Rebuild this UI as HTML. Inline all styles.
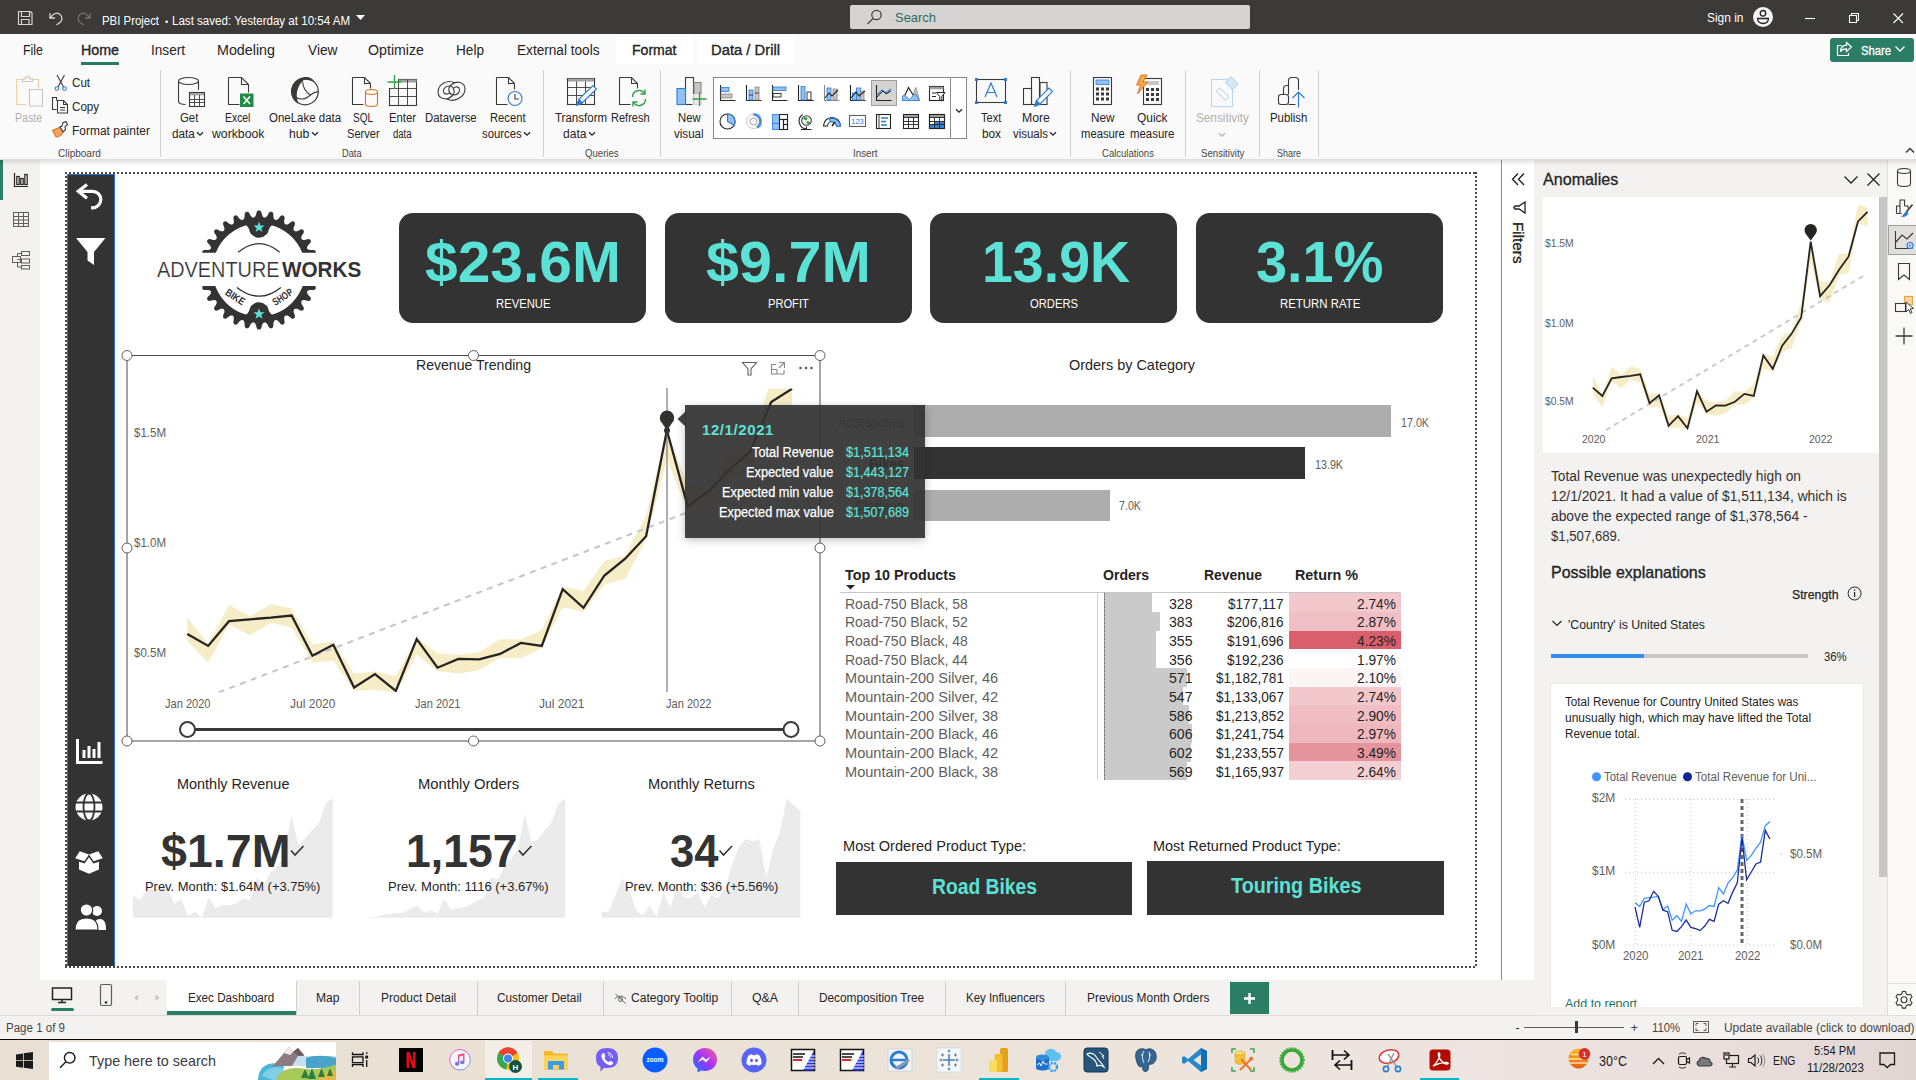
<!DOCTYPE html><html><head><meta charset="utf-8"><title>PBI Project</title><style>

html,body{margin:0;padding:0;}
body{width:1916px;height:1080px;overflow:hidden;background:#fff;position:relative;font-family:"Liberation Sans",sans-serif;}
.r{position:absolute;}
.t{position:absolute;white-space:nowrap;line-height:1;transform-origin:0 50%;}
svg{position:absolute;overflow:visible;}

</style></head><body>
<!-- p_base -->
<div class="r" style="left:0px;top:0px;width:1916px;height:34px;background:#3b3a39;"></div>
<div class="r" style="left:0px;top:34px;width:1916px;height:126px;background:#fafafa;"></div>
<div class="r" style="left:616px;top:35px;width:77px;height:29px;background:#ffffff;"></div>
<div class="r" style="left:697px;top:35px;width:97px;height:29px;background:#ffffff;"></div>
<div class="r" style="left:0px;top:159px;width:1916px;height:1px;background:#e1dfdd;"></div>
<div class="r" style="left:0px;top:160px;width:40px;height:856px;background:#f3f2f1;"></div>
<div class="r" style="left:0px;top:160px;width:3px;height:39.5px;background:#2e7d67;"></div>
<div class="r" style="left:1501px;top:160px;width:1.3px;height:820px;background:#8f8d8b;"></div>
<div class="r" style="left:1502.5px;top:160px;width:32px;height:820px;background:#ffffff;"></div>
<div class="r" style="left:1534px;top:160px;width:353px;height:856px;background:#f3f2f1;"></div>
<div class="r" style="left:1887px;top:160px;width:29px;height:856px;background:#faf9f8;"></div>
<div class="r" style="left:1887px;top:160px;width:1px;height:856px;background:#e1dfdd;"></div>
<div class="r" style="left:0;top:160px;width:1916px;height:6px;background:linear-gradient(rgba(0,0,0,0.11),rgba(0,0,0,0))"></div>
<div class="r" style="left:0px;top:980px;width:1534px;height:36px;background:#f3f2f1;"></div>
<div class="r" style="left:0px;top:1016px;width:1916px;height:23px;background:#f3f2f1;"></div>
<div class="r" style="left:0px;top:1038.7px;width:1916px;height:1.6px;background:#0a0a0a;"></div>
<div class="r" style="left:0;top:1040.3px;width:1916px;height:39.7px;background:linear-gradient(90deg,#e8e0d5 0%,#eae0d4 20%,#ece4da 55%,#eee4e2 78%,#e9dddb 92%,#e2d6d4 100%)"></div>
<!-- p_title -->
<svg style="left:0;top:0" width="400" height="34" viewBox="0 0 400 34" fill="none" stroke="#d8d6d4" stroke-width="1.2">
<path d="M18.5 11.5h12l1.5 1.5v11.5h-13.5z M21.5 11.5v5h8v-5 M21.5 24.5v-5h7.5v5" />
<path d="M50 13v5h5 M50.5 18c2-4 6-6 9-4s3 6 1 8l-4 3" stroke-width="1.3"/>
<path d="M90 13v5h-5 M89.500 18c-2-4-6-6-9-4s-3 6-1 8l4 3" stroke="#77736f" stroke-width="1.3"/>
<path d="M356 15h9l-4.500 5z" fill="#ffffff" stroke="none"/>
</svg>
<div class="t" style="left:102.0px;top:14.6px;font-size:12.5px;color:#ffffff;transform:scaleX(0.912);">PBI Project</div>
<div class="t" style="left:165.0px;top:17.6px;font-size:9px;color:#ffffff;transform:scaleX(1.000);">•</div>
<div class="t" style="left:172.0px;top:14.6px;font-size:12.5px;color:#ffffff;transform:scaleX(0.925);">Last saved: Yesterday at 10:54 AM</div>
<div class="r" style="left:850px;top:5px;width:400px;height:24px;background:#d6d4d2;border-radius:2px;"></div>
<svg style="left:866px;top:9px" width="18" height="16" viewBox="0 0 18 16" fill="none" stroke="#444" stroke-width="1.3"><circle cx="10.500" cy="6" r="4.700"/><path d="M7 9.500L1.500 15"/></svg>
<div class="t" style="left:895.0px;top:10.9px;font-size:13.5px;color:#2f6b5c;transform:scaleX(0.959);">Search</div>
<div class="t" style="left:1707.0px;top:12.1px;font-size:12.5px;color:#ffffff;transform:scaleX(0.955);">Sign in</div>
<svg style="left:1753px;top:7px" width="20" height="20" viewBox="0 0 20 20"><circle cx="10" cy="10" r="10" fill="#f5f5f5"/><circle cx="10" cy="6.300" r="2.800" fill="none" stroke="#222" stroke-width="1.300"/><path d="M4.600 11.500h10.800c0 3.200-2.400 5-5.400 5s-5.400-1.800-5.400-5z" fill="none" stroke="#222" stroke-width="1.300"/></svg>
<svg style="left:1800px;top:8px" width="110" height="20" viewBox="0 0 110 20" fill="none" stroke="#fff" stroke-width="1.1"><path d="M5 10.500h10"/><path d="M49.500 7.500h7v7h-7z M51.500 7.500v-2h7v7h-2"/><path d="M93.500 5.500l9.500 9.500 M103 5.500l-9.500 9.500"/></svg>
<div class="t" style="left:23.0px;top:42.9px;font-size:14px;color:#252423;transform:scaleX(0.887);">File</div>
<div class="t" style="left:81.0px;top:42.9px;font-size:14px;color:#252423;transform:scaleX(1.018);-webkit-text-stroke:0.35px #252423;">Home</div>
<div class="t" style="left:150.5px;top:42.9px;font-size:14px;color:#252423;transform:scaleX(0.971);">Insert</div>
<div class="t" style="left:217.0px;top:42.9px;font-size:14px;color:#252423;transform:scaleX(1.021);">Modeling</div>
<div class="t" style="left:307.5px;top:42.9px;font-size:14px;color:#252423;transform:scaleX(0.980);">View</div>
<div class="t" style="left:368.0px;top:42.9px;font-size:14px;color:#252423;transform:scaleX(1.014);">Optimize</div>
<div class="t" style="left:456.0px;top:42.9px;font-size:14px;color:#252423;transform:scaleX(0.972);">Help</div>
<div class="t" style="left:517.0px;top:42.9px;font-size:14px;color:#252423;transform:scaleX(0.973);">External tools</div>
<div class="t" style="left:631.5px;top:42.9px;font-size:14px;color:#252423;transform:scaleX(1.004);-webkit-text-stroke:0.35px #252423;">Format</div>
<div class="t" style="left:710.5px;top:42.9px;font-size:14px;color:#252423;transform:scaleX(1.056);-webkit-text-stroke:0.35px #252423;">Data / Drill</div>
<div class="r" style="left:81px;top:62px;width:38px;height:3px;background:#2a7b64;"></div>
<div class="r" style="left:1830px;top:38px;width:84px;height:24px;background:#2b7d66;border-radius:3px;"></div>
<svg style="left:1836px;top:41px" width="18" height="16" viewBox="0 0 18 16" fill="none" stroke="#fff" stroke-width="1.2"><path d="M5.500 4.500h-4v10h11v-2.500"/><path d="M10.500 1.500l5 4.500-5 4.500v-2.700c-3 0-5 1-6 3 0-4 2-6.500 6-6.700z"/></svg>
<div class="t" style="left:1861.0px;top:44.0px;font-size:13px;color:#ffffff;transform:scaleX(0.865);-webkit-text-stroke:0.3px #fff;">Share</div>
<svg style="left:1894px;top:45px" width="12" height="8" viewBox="0 0 12 8" fill="none" stroke="#fff" stroke-width="1.3"><path d="M1.500 1.500l4.500 4.500 4.500-4.500"/></svg>
<svg style="left:1905px;top:147px" width="10" height="7" viewBox="0 0 10 7" fill="none" stroke="#333" stroke-width="1.4"><path d="M1 5.500l4-4 4 4"/></svg>
<!-- p_ribbon -->
<div class="r" style="left:160px;top:70px;width:1px;height:87px;background:#d2d0ce;"></div>
<div class="r" style="left:543px;top:70px;width:1px;height:87px;background:#d2d0ce;"></div>
<div class="r" style="left:660px;top:70px;width:1px;height:87px;background:#d2d0ce;"></div>
<div class="r" style="left:1070px;top:70px;width:1px;height:87px;background:#d2d0ce;"></div>
<div class="r" style="left:1185px;top:70px;width:1px;height:87px;background:#d2d0ce;"></div>
<div class="r" style="left:1259px;top:70px;width:1px;height:87px;background:#d2d0ce;"></div>
<div class="r" style="left:1318px;top:70px;width:1px;height:87px;background:#d2d0ce;"></div>
<svg style="left:13px;top:75px" width="34" height="34" viewBox="0 0 34 34" fill="none" stroke="#3b3a39" stroke-width="1.1"><path d="M9 4.500h-5.500v25h9.500 M20 4.500h5.500v9" stroke="#f3cfa6"/><path d="M9.500 6.500v-2.500h2.500a2.500 2.500 0 0 1 5 0h2.500v2.500z" stroke="#c8c6c4" fill="#fafafa"/><path d="M16.500 14.500h13v16.500h-13z" stroke="#c8c6c4" fill="#fafafa"/></svg>
<div class="t" style="left:14.7px;top:112.4px;font-size:12px;color:#b3b0ad;transform:scaleX(0.880);">Paste</div>
<svg style="left:53px;top:74px" width="16" height="18" viewBox="0 0 16 18" fill="none" stroke="#3b3a39" stroke-width="1.100"><path d="M4 1l6.500 12 M11.500 1l-6.500 12"/><circle cx="4" cy="14.500" r="1.800" stroke="#2b7cd3"/><circle cx="11.500" cy="14.500" r="1.800" stroke="#2b7cd3"/></svg>
<div class="t" style="left:72.1px;top:77.1px;font-size:12px;color:#252423;transform:scaleX(0.969);">Cut</div>
<svg style="left:51px;top:96px" width="18" height="18" viewBox="0 0 18 18" fill="none" stroke="#3b3a39" stroke-width="1.100"><path d="M5.500 4.500v-3h-4v12h4"/><path d="M6.500 4.500h6l4 4v8.500h-10z M12.500 4.500v4h4 M9 11.500h5 M9 14h5"/></svg>
<div class="t" style="left:72.1px;top:101.1px;font-size:12px;color:#252423;transform:scaleX(0.967);">Copy</div>
<svg style="left:51px;top:121px" width="18" height="17" viewBox="0 0 18 17" fill="none" stroke="#3b3a39" stroke-width="1.100"><path d="M1.500 9.500l8-3.500 2.500 5.500c-2 3-5 4.500-7 4.500z" fill="#f0a060" stroke="#d9731c"/><path d="M9 6l2-1 1-3.500 3 -0.800 1.500 3-2.500 2 .5 3-2.500 2z" fill="#fafafa"/></svg>
<div class="t" style="left:72.1px;top:125.3px;font-size:12px;color:#252423;transform:scaleX(0.998);">Format painter</div>
<div class="t" style="left:58.4px;top:148.4px;font-size:11px;color:#484644;transform:scaleX(0.909);">Clipboard</div>
<svg style="left:174px;top:75px" width="34" height="34" viewBox="0 0 34 34" fill="none" stroke="#3b3a39" stroke-width="1.1"><path d="M4.500 6v20c0 2 3 3.500 7 3.500 M24.500 6v9" /><ellipse cx="14.500" cy="6" rx="10" ry="3.500"/><rect x="15.500" y="17.500" width="15" height="14" fill="#fafafa"/><path d="M16 19.200h14" stroke-width="2.200" stroke="#a19f9d"/><path d="M15.500 24.500h15 M15.500 27.500h15 M20.500 20v11.500 M25.500 20v11.500" stroke-width="0.900"/></svg>
<div class="t" style="left:180.0px;top:112.4px;font-size:12px;color:#252423;transform:scaleX(0.946);">Get</div>
<div class="t" style="left:171.6px;top:128.4px;font-size:12px;color:#252423;transform:scaleX(0.981);">data</div>
<svg style="left:196px;top:131px" width="8" height="6" viewBox="0 0 8 6" fill="none" stroke="#252423" stroke-width="1.3"><path d="M1 1.200l3 3 3-3"/></svg>
<svg style="left:223px;top:75px" width="34" height="34" viewBox="0 0 34 34" fill="none" stroke="#3b3a39" stroke-width="1.1"><path d="M5.500 2.500h13l7 7v8 M5.500 2.500v27h11 M18.500 2.500v7h7"/><rect x="17" y="18.500" width="13.500" height="13.500" fill="#1e8a44" stroke="none"/><path d="M20.500 21.500l6.500 7.500 M27 21.500l-6.500 7.500" stroke="#fff" stroke-width="1.600"/></svg>
<div class="t" style="left:225.0px;top:112.4px;font-size:12px;color:#252423;transform:scaleX(0.866);">Excel</div>
<div class="t" style="left:211.7px;top:128.4px;font-size:12px;color:#252423;transform:scaleX(1.020);">workbook</div>
<svg style="left:287.5px;top:75px" width="34" height="34" viewBox="0 0 34 34" fill="none" stroke="#3b3a39" stroke-width="1.1"><circle cx="17" cy="16.500" r="13.300" stroke-width="1.200"/><path d="M17 3.200C9 3.200 3.700 9.500 3.700 16.500c0 5 2.500 9 6.300 11.500C6.500 22 7.500 10 17 3.200z" fill="#3b3a39"/><path d="M11.500 5.500c3-4 10.500-4 13.500 0.500-4-2-9.500-2-13.500-0.500z" fill="#3b3a39"/><path d="M14.500 6.500c0.500 6 3 10.500 8 13.500 3-2.500 5.500-3.500 8-3"/><path d="M8 22.500c4.500 2.500 10 1.500 14.500-2.500"/></svg>
<div class="t" style="left:268.6px;top:112.4px;font-size:12px;color:#252423;transform:scaleX(0.956);">OneLake data</div>
<div class="t" style="left:288.6px;top:128.4px;font-size:12px;color:#252423;transform:scaleX(1.019);">hub</div>
<svg style="left:310.5px;top:131px" width="8" height="6" viewBox="0 0 8 6" fill="none" stroke="#252423" stroke-width="1.3"><path d="M1 1.200l3 3 3-3"/></svg>
<svg style="left:348px;top:75px" width="34" height="34" viewBox="0 0 34 34" fill="none" stroke="#3b3a39" stroke-width="1.1"><path d="M4.500 2.500h12l6 6v5 M4.500 2.500v27h11 M16.500 2.500v6h6"/><path d="M17.500 17v12c0 1.500 2.500 2.500 6 2.500s6-1 6-2.500v-12" stroke="#d9731c" fill="#fafafa"/><ellipse cx="23.500" cy="17" rx="6" ry="2.500" stroke="#d9731c" fill="#fafafa"/></svg>
<div class="t" style="left:352.7px;top:112.4px;font-size:12px;color:#252423;transform:scaleX(0.837);">SQL</div>
<div class="t" style="left:346.7px;top:128.4px;font-size:12px;color:#252423;transform:scaleX(0.922);">Server</div>
<svg style="left:385px;top:76px" width="34" height="34" viewBox="0 0 34 34" fill="none" stroke="#3b3a39" stroke-width="1.1"><rect x="4.500" y="3.500" width="27" height="26" /><path d="M13 5h18.500" stroke="#a19f9d" stroke-width="3"/><path d="M4.500 12.500h27 M4.500 20.500h27 M13.500 3.500v26 M22.500 3.500v26" stroke-width="0.900"/><rect x="0" y="0" width="13" height="12" fill="#fafafa" stroke="none"/><path d="M9.500 -1v14 M2.500 6h14" stroke="#2ea043" stroke-width="1.300"/></svg>
<div class="t" style="left:389.3px;top:112.4px;font-size:12px;color:#252423;transform:scaleX(0.945);">Enter</div>
<div class="t" style="left:393.3px;top:128.4px;font-size:12px;color:#252423;transform:scaleX(0.796);">data</div>
<svg style="left:433.5px;top:75px" width="34" height="34" viewBox="0 0 34 34" fill="none" stroke="#3b3a39" stroke-width="1.1"><path d="M21 8c-7-4-17 1-17 9 0 7 9 9 14 4 4-4 2-10-3-10-4 0-7 4-5 7 2 2 5 1 6-1" stroke-width="1.100"/><path d="M13 24c7 4 18-2 18-10 0-7-9-9-14-4-4 4-2 10 3 10 4 0 7-4 5-7-2-2-5-1-6 1" stroke-width="1.100"/></svg>
<div class="t" style="left:425.4px;top:112.4px;font-size:12px;color:#252423;transform:scaleX(0.944);">Dataverse</div>
<svg style="left:491px;top:75px" width="34" height="34" viewBox="0 0 34 34" fill="none" stroke="#3b3a39" stroke-width="1.1"><path d="M5.500 2.500h12l6 6v6 M5.500 2.500v27h11 M17.500 2.500v6h6"/><circle cx="24" cy="23.500" r="7" stroke="#2b7cd3" fill="#fafafa"/><path d="M24 19v5h4" stroke="#3b3a39"/></svg>
<div class="t" style="left:489.5px;top:112.4px;font-size:12px;color:#252423;transform:scaleX(0.936);">Recent</div>
<div class="t" style="left:481.5px;top:128.4px;font-size:12px;color:#252423;transform:scaleX(0.943);">sources</div>
<svg style="left:522.5px;top:131px" width="8" height="6" viewBox="0 0 8 6" fill="none" stroke="#252423" stroke-width="1.3"><path d="M1 1.200l3 3 3-3"/></svg>
<div class="t" style="left:342.2px;top:148.4px;font-size:11px;color:#484644;transform:scaleX(0.844);">Data</div>
<svg style="left:563px;top:75px" width="34" height="34" viewBox="0 0 34 34" fill="none" stroke="#3b3a39" stroke-width="1.1"><rect x="4.500" y="3.500" width="27" height="26"/><path d="M5 5h26" stroke="#a19f9d" stroke-width="3"/><path d="M4.500 12.500h27 M4.500 20.500h27 M13.500 6.500v23 M22.500 6.500v23" stroke-width="0.900"/><path d="M14 30l2-6 14-13.500 3.500 3.500-14 13.500z" fill="#fafafa" stroke="#2b7cd3"/><path d="M14 30l2-5.500 3.500 3.500z" fill="#2b7cd3" stroke="#2b7cd3"/></svg>
<div class="t" style="left:554.7px;top:112.4px;font-size:12px;color:#252423;transform:scaleX(0.961);">Transform</div>
<div class="t" style="left:562.7px;top:128.4px;font-size:12px;color:#252423;transform:scaleX(1.006);">data</div>
<svg style="left:587.5px;top:131px" width="8" height="6" viewBox="0 0 8 6" fill="none" stroke="#252423" stroke-width="1.3"><path d="M1 1.200l3 3 3-3"/></svg>
<svg style="left:615px;top:75px" width="34" height="34" viewBox="0 0 34 34" fill="none" stroke="#3b3a39" stroke-width="1.1"><path d="M4.500 2.500h12l6 6v5 M4.500 2.500v27h11 M16.500 2.500v6h6"/><path d="M17.500 22a6.500 6.500 0 0 1 12-3.500 M30.500 24a6.500 6.500 0 0 1-12 3.500" stroke="#2ea043" stroke-width="1.400"/><path d="M30 14.500v4.500h-4.500 M18 31.500v-4.500h4.500" stroke="#2ea043" stroke-width="1.400"/></svg>
<div class="t" style="left:611.3px;top:112.4px;font-size:12px;color:#252423;transform:scaleX(0.919);">Refresh</div>
<div class="t" style="left:585.2px;top:148.4px;font-size:11px;color:#484644;transform:scaleX(0.872);">Queries</div>
<svg style="left:673px;top:75px" width="34" height="34" viewBox="0 0 34 34" fill="none" stroke="#3b3a39" stroke-width="1.1"><rect x="12.500" y="2.500" width="8" height="27" fill="#fafafa"/><rect x="21" y="7.500" width="7" height="22" fill="#c8c6c4" stroke="#8a8886"/><rect x="4" y="13.500" width="8.500" height="16" fill="#8fc1f2" stroke="#2b7cd3"/><rect x="19" y="19" width="14" height="13" fill="#fafafa" stroke="none" opacity="0.7"/><path d="M26.500 17v14 M19.500 24h14" stroke="#2ea043" stroke-width="1.300"/></svg>
<div class="t" style="left:677.9px;top:112.4px;font-size:12px;color:#252423;transform:scaleX(0.941);">New</div>
<div class="t" style="left:673.9px;top:128.4px;font-size:12px;color:#252423;transform:scaleX(0.965);">visual</div>
<div class="r" style="left:713px;top:77px;width:254px;height:61.5px;background:#ffffff;border:1px solid #8a8886;box-sizing:border-box;"></div>
<div class="r" style="left:950px;top:77.5px;width:1px;height:60.5px;background:#8a8886;"></div>
<div class="r" style="left:871px;top:80px;width:26px;height:26px;background:#d6d4d2;border:1px solid #a19f9d;box-sizing:border-box;"></div>
<svg style="left:954.5px;top:108px" width="8" height="6" viewBox="0 0 8 6" fill="none" stroke="#252423" stroke-width="1.3"><path d="M1 1.200l3 3 3-3"/></svg>
<svg style="left:718px;top:84px" width="20" height="20" viewBox="0 0 20 20" fill="none" stroke="#252423" stroke-width="1.100"><path d="M2.500 1v15.500h15" /><rect x="3" y="3.500" width="8" height="4" fill="#8fc1f2" stroke="#2b7cd3" stroke-width="0.800"/><rect x="3" y="10" width="11" height="4" fill="#c8c6c4" stroke="#8a8886" stroke-width="0.800"/></svg>
<svg style="left:744px;top:84px" width="20" height="20" viewBox="0 0 20 20" fill="none" stroke="#252423" stroke-width="1.100"><path d="M2.500 1v15.500h15"/><rect x="5" y="6" width="4" height="10" fill="#8fc1f2" stroke="#2b7cd3" stroke-width="0.800"/><rect x="11" y="3" width="4" height="13" fill="#c8c6c4" stroke="#8a8886" stroke-width="0.800"/><path d="M5 11h4 M11 9h4" stroke-width="0.800"/></svg>
<svg style="left:770px;top:84px" width="20" height="20" viewBox="0 0 20 20" fill="none" stroke="#252423" stroke-width="1.100"><path d="M2.500 1v15.500h15"/><rect x="3" y="3" width="13" height="3.500" fill="#8fc1f2" stroke="#2b7cd3" stroke-width="0.800"/><rect x="3" y="9.500" width="8" height="3.500" fill="none" stroke-width="0.900"/></svg>
<svg style="left:796px;top:84px" width="20" height="20" viewBox="0 0 20 20" fill="none" stroke="#252423" stroke-width="1.100"><path d="M2.500 1v15.500h15"/><rect x="5" y="2.500" width="4" height="13.500" fill="#8fc1f2" stroke="#2b7cd3" stroke-width="0.800"/><rect x="11" y="8" width="4" height="8" fill="none" stroke-width="0.900"/></svg>
<svg style="left:822px;top:84px" width="20" height="20" viewBox="0 0 20 20" fill="none" stroke="#252423" stroke-width="1.100"><path d="M2.500 1v15.500h15" stroke="#8a8886"/><rect x="5" y="4" width="4" height="12" fill="#8fc1f2" stroke="#2b7cd3" stroke-width="0.800"/><rect x="11" y="5" width="4" height="11" fill="#c8c6c4" stroke="#8a8886" stroke-width="0.800"/><path d="M3 14l4-5 3 3 6-6" stroke-width="1.100"/></svg>
<svg style="left:848px;top:84px" width="20" height="20" viewBox="0 0 20 20" fill="none" stroke="#252423" stroke-width="1.100"><path d="M2.500 1v15.500h15"/><rect x="4.500" y="9" width="4" height="7" fill="#8fc1f2" stroke="#2b7cd3" stroke-width="0.800"/><rect x="8.500" y="4" width="4" height="12" fill="#8fc1f2" stroke="#2b7cd3" stroke-width="0.800"/><rect x="12.500" y="7" width="3.500" height="9" fill="#c8c6c4" stroke="#8a8886" stroke-width="0.800"/><path d="M3 14l5-6 3 4 6-5" stroke-width="1.100"/></svg>
<svg style="left:874px;top:84px" width="20" height="20" viewBox="0 0 20 20" fill="none" stroke="#252423" stroke-width="1.100"><path d="M2.500 1v15.500h15"/><path d="M3 11l5-5 4 3 5-4" stroke="#2b7cd3" stroke-width="1.100"/><path d="M3 13l6-6 3 3 5-3" stroke-width="1" /></svg>
<svg style="left:901px;top:84px" width="20" height="20" viewBox="0 0 20 20" fill="none" stroke="#252423" stroke-width="1.100"><path d="M12 9.500l3-6 3.500 13h-6z" fill="#c8c6c4" stroke="#8a8886" stroke-width="0.800"/><path d="M1.500 16.500l6-13 4.500 7.500" fill="none"/><path d="M1.500 16.500v-4.500l2-1 5 4.500 5.500-6 4.500 7z" fill="#8fc1f2" stroke="#2b7cd3" stroke-width="0.800"/></svg>
<svg style="left:927px;top:84px" width="20" height="20" viewBox="0 0 20 20" fill="none" stroke="#252423" stroke-width="1.100"><rect x="2.500" y="2.500" width="14" height="14"/><path d="M2.500 4h14" stroke="#a19f9d" stroke-width="2.500"/><path d="M5 9h4 M5 12.500h4" stroke-width="1.200"/><path d="M9.500 8.500h8.500l-3.200 4v4.500l-2 -1v-3.500z" fill="#fff" stroke-width="1"/></svg>
<svg style="left:718px;top:112px" width="20" height="20" viewBox="0 0 20 20" fill="none" stroke="#252423" stroke-width="1.100"><circle cx="9.500" cy="9.500" r="7.500"/><path d="M9.500 9.500v-7.500a7.500 7.500 0 0 1 6.500 11.200z" fill="#8fc1f2" stroke="#2b7cd3"/></svg>
<svg style="left:744px;top:112px" width="20" height="20" viewBox="0 0 20 20" fill="none" stroke="#252423" stroke-width="1.100"><circle cx="9.500" cy="9.500" r="7" stroke="#c8c6c4" stroke-width="1"/><circle cx="9.500" cy="9.500" r="3.500" stroke="#a19f9d" stroke-width="1"/><path d="M9.500 2.500a7 7 0 0 1 3.500 13" stroke="#2b7cd3" stroke-width="3" stroke-opacity="0.800"/></svg>
<svg style="left:770px;top:112px" width="20" height="20" viewBox="0 0 20 20" fill="none" stroke="#252423" stroke-width="1.100"><rect x="2.500" y="2.500" width="7" height="9" fill="#8fc1f2" stroke="#2b7cd3" stroke-width="0.800"/><rect x="2.500" y="11.500" width="7" height="6" fill="#8fc1f2" stroke="#2b7cd3" stroke-width="0.800"/><rect x="9.500" y="2.500" width="8" height="5" fill="none"/><rect x="9.500" y="7.500" width="4" height="10" fill="none"/><rect x="13.500" y="7.500" width="4" height="5" fill="none"/><rect x="13.500" y="12.500" width="4" height="5" fill="none"/></svg>
<svg style="left:796px;top:112px" width="20" height="20" viewBox="0 0 20 20" fill="none" stroke="#252423" stroke-width="1.100"><circle cx="10.500" cy="8.500" r="4.800" fill="#fff" stroke="#3b3a39"/><path d="M7.500 6.500c1.500-2 4-1.500 3.500.5s-2 1-3.500-.5z M10.500 10c1.500-1 3.500-.5 3 1s-2.500 1-3-1z" fill="#2ea043" stroke="#2ea043" stroke-width="0.600"/><path d="M6.500 2.500a8 8 0 0 0 4 14.500 M5 17.500h10.500 M10.500 14.500v3" /></svg>
<svg style="left:822px;top:112px" width="20" height="20" viewBox="0 0 20 20" fill="none" stroke="#252423" stroke-width="1.100"><path d="M1.500 14a8.500 8.500 0 0 1 17 0h-4a4.500 4.500 0 0 0-9 0z" fill="#fff"/><path d="M7 7a8.500 8.500 0 0 1 11.500 7h-4a4.500 4.500 0 0 0-5.500-4z" fill="#8fc1f2" stroke="#2b7cd3"/><path d="M10 14l3-4" stroke-width="1.500"/></svg>
<svg style="left:848px;top:112px" width="20" height="20" viewBox="0 0 20 20" fill="none" stroke="#252423" stroke-width="1.100"><rect x="1.500" y="3.500" width="16" height="11" stroke="#605e5c"/><text x="9.500" y="12" font-size="7.500" text-anchor="middle" fill="#2b7cd3" stroke="none" font-family="Liberation Sans, sans-serif">123</text></svg>
<svg style="left:874px;top:112px" width="20" height="20" viewBox="0 0 20 20" fill="none" stroke="#252423" stroke-width="1.100"><rect x="2.500" y="2.500" width="14" height="14"/><path d="M5 3v13" stroke-width="0.900"/><path d="M7 6h7 M7 9.500h5 M7 13h6" stroke="#2b7cd3" stroke-width="1.600"/></svg>
<svg style="left:901px;top:112px" width="20" height="20" viewBox="0 0 20 20" fill="none" stroke="#252423" stroke-width="1.100"><rect x="2.500" y="2.500" width="15" height="14"/><rect x="3" y="3" width="14" height="2.500" fill="#a19f9d" stroke="none"/><path d="M2.500 5.500h15 M2.500 9.500h15 M2.500 12.500h15 M7.500 5.500v11 M12.500 5.500v11" stroke-width="0.900"/></svg>
<svg style="left:927px;top:112px" width="20" height="20" viewBox="0 0 20 20" fill="none" stroke="#252423" stroke-width="1.100"><rect x="2.500" y="2.500" width="15" height="14"/><rect x="7.500" y="9.500" width="10" height="7" fill="#3a86d6" stroke="none"/><rect x="2.500" y="12.500" width="5" height="4" fill="#3a86d6" stroke="none"/><rect x="3" y="3" width="14" height="2.500" fill="#a19f9d" stroke="none"/><path d="M2.500 5.500h15 M2.500 9.500h15 M2.500 12.500h15 M7.500 5.500v11 M12.500 5.500v11" stroke-width="0.900"/><rect x="2.500" y="2.500" width="15" height="14"/></svg>
<div class="t" style="left:853.3px;top:148.4px;font-size:11px;color:#484644;transform:scaleX(0.891);">Insert</div>
<svg style="left:973px;top:75px" width="36" height="34" viewBox="0 0 36 34" fill="none" stroke="#3b3a39" stroke-width="1.1"><rect x="3.500" y="4.500" width="29" height="23"/><path d="M12 22l6-14 6 14 M14 17.500h8" stroke="#2b7cd3" stroke-width="1.200"/><g fill="#2b7cd3" stroke="none"><rect x="2" y="3" width="3" height="3"/><rect x="31" y="3" width="3" height="3"/><rect x="2" y="26" width="3" height="3"/><rect x="31" y="26" width="3" height="3"/></g></svg>
<div class="t" style="left:981.0px;top:112.4px;font-size:12px;color:#252423;transform:scaleX(0.927);">Text</div>
<div class="t" style="left:982.0px;top:128.4px;font-size:12px;color:#252423;transform:scaleX(0.982);">box</div>
<svg style="left:1020px;top:75px" width="34" height="34" viewBox="0 0 34 34" fill="none" stroke="#3b3a39" stroke-width="1.1"><rect x="11.500" y="2.500" width="8" height="27" fill="#fafafa"/><rect x="20" y="7.500" width="7" height="22" fill="#fafafa"/><rect x="3.500" y="13.500" width="8" height="16" fill="#fafafa"/><path d="M15 31l1.500-5.500 12.500-12.500 3.500 3.500-12.500 12.500z" fill="#fafafa" stroke="#2b7cd3"/><path d="M15 31l1.500-5.500 3.500 3.500z" fill="#2b7cd3" stroke="#2b7cd3"/></svg>
<div class="t" style="left:1022.4px;top:112.4px;font-size:12px;color:#252423;transform:scaleX(1.021);">More</div>
<div class="t" style="left:1012.9px;top:128.4px;font-size:12px;color:#252423;transform:scaleX(0.952);">visuals</div>
<svg style="left:1049px;top:131px" width="8" height="6" viewBox="0 0 8 6" fill="none" stroke="#252423" stroke-width="1.3"><path d="M1 1.200l3 3 3-3"/></svg>
<svg style="left:1085px;top:75px" width="34" height="34" viewBox="0 0 34 34" fill="none" stroke="#3b3a39" stroke-width="1.1"><rect x="8.500" y="2.500" width="18" height="27"/><rect x="11" y="5" width="13" height="4.500" fill="#8fc1f2" stroke="#2b7cd3" stroke-width="0.800"/><g fill="#3b3a39" stroke="none"><rect x="11" y="12.500" width="3" height="3"/><rect x="16" y="12.500" width="3" height="3"/><rect x="21" y="12.500" width="3" height="3"/><rect x="11" y="17.500" width="3" height="3"/><rect x="16" y="17.500" width="3" height="3"/><rect x="21" y="17.500" width="3" height="3"/><rect x="11" y="22.500" width="3" height="3"/><rect x="16" y="22.500" width="3" height="3"/><rect x="21" y="22.500" width="3" height="3"/></g></svg>
<div class="t" style="left:1091.2px;top:112.4px;font-size:12px;color:#252423;transform:scaleX(0.979);">New</div>
<div class="t" style="left:1081.3px;top:128.4px;font-size:12px;color:#252423;transform:scaleX(0.940);">measure</div>
<svg style="left:1133px;top:75px" width="34" height="34" viewBox="0 0 34 34" fill="none" stroke="#3b3a39" stroke-width="1.1"><rect x="10.500" y="3.500" width="18" height="26"/><rect x="13" y="6" width="13" height="4" fill="#c8c6c4" stroke="none"/><g fill="#3b3a39" stroke="none"><rect x="13" y="13" width="3" height="3"/><rect x="18" y="13" width="3" height="3"/><rect x="23" y="13" width="3" height="3"/><rect x="13" y="18" width="3" height="3"/><rect x="18" y="18" width="3" height="3"/><rect x="23" y="18" width="3" height="3"/><rect x="13" y="23" width="3" height="3"/><rect x="18" y="23" width="3" height="3"/><rect x="23" y="23" width="3" height="3"/></g><path d="M8 0l-4.500 10h4l-3 9 10-12h-4.500l4-7z" fill="#f7a64a" stroke="#d9731c" stroke-width="0.900"/></svg>
<div class="t" style="left:1137.1px;top:112.4px;font-size:12px;color:#252423;transform:scaleX(0.994);">Quick</div>
<div class="t" style="left:1130.2px;top:128.4px;font-size:12px;color:#252423;transform:scaleX(0.951);">measure</div>
<div class="t" style="left:1101.7px;top:148.4px;font-size:11px;color:#484644;transform:scaleX(0.866);">Calculations</div>
<svg style="left:1207px;top:75px" width="34" height="34" viewBox="0 0 34 34" fill="none" stroke="#3b3a39" stroke-width="1.1"><rect x="4.500" y="4.500" width="21" height="27" stroke="#b9d6f2"/><path d="M9.500 16.500l3.500-3.500 9 9-3.500 3.500z" stroke="#c5dcf3"/><path d="M18.500 7.500l5.500-5.500 7 7-5.500 5.500z" fill="#d6e7f7" stroke="#b9d6f2"/></svg>
<div class="t" style="left:1196.0px;top:112.4px;font-size:12px;color:#b3b0ad;transform:scaleX(0.979);">Sensitivity</div>
<svg style="left:1218px;top:132px" width="8" height="6" viewBox="0 0 8 6" fill="none" stroke="#b3b0ad" stroke-width="1.3"><path d="M1 1.200l3 3 3-3"/></svg>
<div class="t" style="left:1200.5px;top:148.4px;font-size:11px;color:#484644;transform:scaleX(0.876);">Sensitivity</div>
<svg style="left:1271px;top:75px" width="34" height="34" viewBox="0 0 34 34" fill="none" stroke="#3b3a39" stroke-width="1.1"><rect x="7.500" y="19.500" width="10" height="10" rx="2.500"/><path d="M12.500 19.500v-6a3 3 0 0 1 3-3h2 M17.500 19.500v-14a3 3 0 0 1 3-3h4a3 3 0 0 1 3 3v9.500 M17.500 29.500h7"/><path d="M27.500 32.500v-15.500 M21.500 23l6-6 6 6" stroke="#2b7cd3" stroke-width="1.200"/></svg>
<div class="t" style="left:1270.4px;top:112.4px;font-size:12px;color:#252423;transform:scaleX(0.950);">Publish</div>
<div class="t" style="left:1276.9px;top:148.4px;font-size:11px;color:#484644;transform:scaleX(0.814);">Share</div>
<!-- p_report -->
<div class="r" style="left:65px;top:172px;width:1412px;height:2px;background:repeating-linear-gradient(90deg,#4b4845 0,#4b4845 2px,transparent 2px,transparent 4px);"></div><div class="r" style="left:65px;top:966px;width:1412px;height:2px;background:repeating-linear-gradient(90deg,#4b4845 0,#4b4845 2px,transparent 2px,transparent 4px);"></div><div class="r" style="left:65px;top:172px;width:2px;height:795px;background:repeating-linear-gradient(180deg,#4b4845 0,#4b4845 2px,transparent 2px,transparent 4px);"></div><div class="r" style="left:1475px;top:172px;width:2px;height:796px;background:repeating-linear-gradient(180deg,#4b4845 0,#4b4845 2px,transparent 2px,transparent 4px);"></div>
<div class="r" style="left:67px;top:174px;width:48px;height:792px;background:#333333;border:1px solid #2673cc;border-bottom:none;box-sizing:border-box;"></div>
<svg style="left:67px;top:174px" width="48" height="792" viewBox="67 174 48 792" fill="none" stroke="#fff"><path d="M87 184.500l-8.700 6.800 8.700 7 M79 191.300h13.500a8.300 8.300 0 0 1 0 16.600h-1.500" stroke-width="3.200" stroke-linejoin="miter"/><path d="M76 238h29.500l-11.500 14v13l-6.500-4.500v-8.500z" fill="#fff" stroke="none"/><path d="M77.500 739v23.500h25" stroke-width="3"/><g fill="#fff" stroke="none"><rect x="82.500" y="750" width="3" height="8"/><rect x="87.500" y="746" width="3" height="12"/><rect x="92.500" y="749" width="3" height="9"/><rect x="97.500" y="742" width="3" height="16"/></g><circle cx="89" cy="807" r="13.500" fill="#fff" stroke="none"/><g stroke="#333" stroke-width="1.800"><ellipse cx="89" cy="807" rx="5.500" ry="13.500"/><path d="M75 802.500h28 M75 811.500h28"/></g><g fill="#fff" stroke="none"><path d="M75.200 858.300l4.600-7 9.200 3.200-4.600 6.800z M102.800 858.300l-4.600-7-9.200 3.200 4.600 6.800z"/><path d="M79 861.700l5.600 1.900 4.400-6.300 4.400 6.300 5.600-1.900v7.800l-10 4.300-10-4.300z"/></g><g fill="#fff" stroke="none"><circle cx="97" cy="911" r="5"/><path d="M93 930c1-8 3-11 7-11 5 0 6 5 6 11z"/><circle cx="86.500" cy="910" r="6.200" stroke="#333" stroke-width="1.200"/><path d="M75 930c0-8 4-12 11.500-12s11.500 4 11.500 12z" stroke="#333" stroke-width="1.200"/></g></svg>
<svg style="left:193.8px;top:204.7px" width="130" height="130" viewBox="-65 -65 130 130"><defs><clipPath id="gcl"><rect x="-65" y="-65" width="130" height="47.800"/><rect x="-65" y="15.900" width="130" height="50"/></clipPath></defs><g clip-path="url(#gcl)"><path d="M0.00,-59.60 L0.52,-59.56 L1.04,-59.39 L1.55,-59.02 L2.04,-58.41 L2.50,-57.21 L2.91,-55.44 L3.33,-54.39 L3.75,-53.65 L4.18,-53.12 L4.62,-52.75 L5.06,-52.52 L5.51,-52.41 L5.97,-52.42 L6.45,-52.56 L6.96,-52.83 L7.49,-53.26 L8.05,-53.89 L8.69,-54.84 L9.45,-56.48 L10.15,-57.56 L10.76,-58.05 L11.33,-58.30 L11.88,-58.37 L12.39,-58.30 L12.89,-58.15 L13.36,-57.87 L13.78,-57.41 L14.14,-56.71 L14.34,-55.44 L14.37,-53.63 L14.56,-52.51 L14.82,-51.70 L15.13,-51.09 L15.48,-50.64 L15.87,-50.32 L16.29,-50.12 L16.74,-50.04 L17.24,-50.07 L17.79,-50.23 L18.39,-50.54 L19.08,-51.04 L19.90,-51.83 L20.99,-53.28 L21.89,-54.19 L22.59,-54.54 L23.21,-54.67 L23.75,-54.62 L24.24,-54.45 L24.70,-54.20 L25.10,-53.83 L25.42,-53.29 L25.62,-52.53 L25.55,-51.25 L25.21,-49.47 L25.16,-48.33 L25.25,-47.49 L25.43,-46.83 L25.67,-46.31 L25.98,-45.92 L26.35,-45.64 L26.78,-45.46 L27.27,-45.39 L27.84,-45.43 L28.50,-45.61 L29.28,-45.96 L30.24,-46.56 L31.61,-47.75 L32.68,-48.45 L33.44,-48.66 L34.07,-48.65 L34.59,-48.49 L35.03,-48.22 L35.43,-47.88 L35.75,-47.44 L35.94,-46.84 L35.98,-46.06 L35.65,-44.81 L34.94,-43.15 L34.66,-42.05 L34.57,-41.20 L34.61,-40.52 L34.74,-39.96 L34.96,-39.52 L35.26,-39.16 L35.65,-38.90 L36.11,-38.73 L36.68,-38.65 L37.36,-38.69 L38.19,-38.87 L39.26,-39.26 L40.84,-40.14 L42.04,-40.60 L42.82,-40.64 L43.44,-40.51 L43.92,-40.24 L44.29,-39.88 L44.61,-39.47 L44.83,-38.97 L44.89,-38.34 L44.77,-37.57 L44.19,-36.42 L43.15,-34.94 L42.64,-33.92 L42.38,-33.11 L42.27,-32.44 L42.29,-31.87 L42.41,-31.38 L42.64,-30.98 L42.95,-30.64 L43.38,-30.37 L43.91,-30.18 L44.59,-30.07 L45.44,-30.08 L46.56,-30.24 L48.29,-30.77 L49.57,-30.97 L50.34,-30.85 L50.91,-30.59 L51.32,-30.23 L51.62,-29.80 L51.84,-29.33 L51.95,-28.80 L51.88,-28.17 L51.61,-27.44 L50.79,-26.44 L49.47,-25.21 L48.77,-24.31 L48.34,-23.58 L48.09,-22.94 L47.99,-22.38 L48.01,-21.88 L48.14,-21.44 L48.39,-21.04 L48.74,-20.69 L49.23,-20.39 L49.87,-20.15 L50.70,-19.97 L51.83,-19.90 L53.64,-20.05 L54.92,-19.99 L55.65,-19.71 L56.16,-19.34 L56.49,-18.90 L56.68,-18.42 L56.81,-17.91 L56.80,-17.37 L56.61,-16.77 L56.18,-16.11 L55.18,-15.30 L53.63,-14.37 L52.75,-13.64 L52.18,-13.01 L51.81,-12.44 L51.60,-11.91 L51.51,-11.42 L51.55,-10.96 L51.70,-10.52 L51.98,-10.10 L52.39,-9.71 L52.97,-9.34 L53.74,-8.99 L54.84,-8.69 L56.63,-8.46 L57.88,-8.13 L58.53,-7.71 L58.95,-7.24 L59.18,-6.74 L59.27,-6.23 L59.29,-5.71 L59.17,-5.18 L58.86,-4.63 L58.30,-4.08 L57.16,-3.50 L55.44,-2.91 L54.44,-2.38 L53.75,-1.88 L53.27,-1.39 L52.95,-0.92 L52.76,-0.46 L52.70,-0.00 L52.76,0.46 L52.95,0.92 L53.27,1.39 L53.75,1.88 L54.44,2.38 L55.44,2.91 L57.16,3.50 L58.30,4.08 L58.86,4.63 L59.17,5.18 L59.29,5.71 L59.27,6.23 L59.18,6.74 L58.95,7.24 L58.53,7.71 L57.88,8.13 L56.63,8.46 L54.84,8.69 L53.74,8.99 L52.97,9.34 L52.39,9.71 L51.98,10.10 L51.70,10.52 L51.55,10.96 L51.51,11.42 L51.60,11.91 L51.81,12.44 L52.18,13.01 L52.75,13.64 L53.63,14.37 L55.18,15.30 L56.18,16.11 L56.61,16.77 L56.80,17.37 L56.81,17.91 L56.68,18.42 L56.49,18.90 L56.16,19.34 L55.65,19.71 L54.92,19.99 L53.64,20.05 L51.83,19.90 L50.70,19.97 L49.87,20.15 L49.23,20.39 L48.74,20.69 L48.39,21.04 L48.14,21.44 L48.01,21.88 L47.99,22.38 L48.09,22.94 L48.34,23.58 L48.77,24.31 L49.47,25.21 L50.79,26.44 L51.61,27.44 L51.88,28.17 L51.95,28.80 L51.84,29.33 L51.62,29.80 L51.32,30.23 L50.91,30.59 L50.34,30.85 L49.57,30.97 L48.29,30.77 L46.56,30.24 L45.44,30.08 L44.59,30.07 L43.91,30.18 L43.38,30.37 L42.95,30.64 L42.64,30.98 L42.41,31.38 L42.29,31.87 L42.27,32.44 L42.38,33.11 L42.64,33.92 L43.15,34.94 L44.19,36.42 L44.77,37.57 L44.89,38.34 L44.83,38.97 L44.61,39.47 L44.29,39.88 L43.92,40.24 L43.44,40.51 L42.82,40.64 L42.04,40.60 L40.84,40.14 L39.26,39.26 L38.19,38.87 L37.36,38.69 L36.68,38.65 L36.11,38.73 L35.65,38.90 L35.26,39.16 L34.96,39.52 L34.74,39.96 L34.61,40.52 L34.57,41.20 L34.66,42.05 L34.94,43.15 L35.65,44.81 L35.98,46.06 L35.94,46.84 L35.75,47.44 L35.43,47.88 L35.03,48.22 L34.59,48.49 L34.07,48.65 L33.44,48.66 L32.68,48.45 L31.61,47.75 L30.24,46.56 L29.28,45.96 L28.50,45.61 L27.84,45.43 L27.27,45.39 L26.78,45.46 L26.35,45.64 L25.98,45.92 L25.67,46.31 L25.43,46.83 L25.25,47.49 L25.16,48.33 L25.21,49.47 L25.55,51.25 L25.62,52.53 L25.42,53.29 L25.10,53.83 L24.70,54.20 L24.24,54.45 L23.75,54.62 L23.21,54.67 L22.59,54.54 L21.89,54.19 L20.99,53.28 L19.90,51.83 L19.08,51.04 L18.39,50.54 L17.79,50.23 L17.24,50.07 L16.74,50.04 L16.29,50.12 L15.87,50.32 L15.48,50.64 L15.13,51.09 L14.82,51.70 L14.56,52.51 L14.37,53.63 L14.34,55.44 L14.14,56.71 L13.78,57.41 L13.36,57.87 L12.89,58.15 L12.39,58.30 L11.88,58.37 L11.33,58.30 L10.76,58.05 L10.15,57.56 L9.45,56.48 L8.69,54.84 L8.05,53.89 L7.49,53.26 L6.96,52.83 L6.45,52.56 L5.97,52.42 L5.51,52.41 L5.06,52.52 L4.62,52.75 L4.18,53.12 L3.75,53.65 L3.33,54.39 L2.91,55.44 L2.50,57.21 L2.04,58.41 L1.55,59.02 L1.04,59.39 L0.52,59.56 L0.00,59.60 L-0.52,59.56 L-1.04,59.39 L-1.55,59.02 L-2.04,58.41 L-2.50,57.21 L-2.91,55.44 L-3.33,54.39 L-3.75,53.65 L-4.18,53.12 L-4.62,52.75 L-5.06,52.52 L-5.51,52.41 L-5.97,52.42 L-6.45,52.56 L-6.96,52.83 L-7.49,53.26 L-8.05,53.89 L-8.69,54.84 L-9.45,56.48 L-10.15,57.56 L-10.76,58.05 L-11.33,58.30 L-11.88,58.37 L-12.39,58.30 L-12.89,58.15 L-13.36,57.87 L-13.78,57.41 L-14.14,56.71 L-14.34,55.44 L-14.37,53.63 L-14.56,52.51 L-14.82,51.70 L-15.13,51.09 L-15.48,50.64 L-15.87,50.32 L-16.29,50.12 L-16.74,50.04 L-17.24,50.07 L-17.79,50.23 L-18.39,50.54 L-19.08,51.04 L-19.90,51.83 L-20.99,53.28 L-21.89,54.19 L-22.59,54.54 L-23.21,54.67 L-23.75,54.62 L-24.24,54.45 L-24.70,54.20 L-25.10,53.83 L-25.42,53.29 L-25.62,52.53 L-25.55,51.25 L-25.21,49.47 L-25.16,48.33 L-25.25,47.49 L-25.43,46.83 L-25.67,46.31 L-25.98,45.92 L-26.35,45.64 L-26.78,45.46 L-27.27,45.39 L-27.84,45.43 L-28.50,45.61 L-29.28,45.96 L-30.24,46.56 L-31.61,47.75 L-32.68,48.45 L-33.44,48.66 L-34.07,48.65 L-34.59,48.49 L-35.03,48.22 L-35.43,47.88 L-35.75,47.44 L-35.94,46.84 L-35.98,46.06 L-35.65,44.81 L-34.94,43.15 L-34.66,42.05 L-34.57,41.20 L-34.61,40.52 L-34.74,39.96 L-34.96,39.52 L-35.26,39.16 L-35.65,38.90 L-36.11,38.73 L-36.68,38.65 L-37.36,38.69 L-38.19,38.87 L-39.26,39.26 L-40.84,40.14 L-42.04,40.60 L-42.82,40.64 L-43.44,40.51 L-43.92,40.24 L-44.29,39.88 L-44.61,39.47 L-44.83,38.97 L-44.89,38.34 L-44.77,37.57 L-44.19,36.42 L-43.15,34.94 L-42.64,33.92 L-42.38,33.11 L-42.27,32.44 L-42.29,31.87 L-42.41,31.38 L-42.64,30.98 L-42.95,30.64 L-43.38,30.37 L-43.91,30.18 L-44.59,30.07 L-45.44,30.08 L-46.56,30.24 L-48.29,30.77 L-49.57,30.97 L-50.34,30.85 L-50.91,30.59 L-51.32,30.23 L-51.62,29.80 L-51.84,29.33 L-51.95,28.80 L-51.88,28.17 L-51.61,27.44 L-50.79,26.44 L-49.47,25.21 L-48.77,24.31 L-48.34,23.58 L-48.09,22.94 L-47.99,22.38 L-48.01,21.88 L-48.14,21.44 L-48.39,21.04 L-48.74,20.69 L-49.23,20.39 L-49.87,20.15 L-50.70,19.97 L-51.83,19.90 L-53.64,20.05 L-54.92,19.99 L-55.65,19.71 L-56.16,19.34 L-56.49,18.90 L-56.68,18.42 L-56.81,17.91 L-56.80,17.37 L-56.61,16.77 L-56.18,16.11 L-55.18,15.30 L-53.63,14.37 L-52.75,13.64 L-52.18,13.01 L-51.81,12.44 L-51.60,11.91 L-51.51,11.42 L-51.55,10.96 L-51.70,10.52 L-51.98,10.10 L-52.39,9.71 L-52.97,9.34 L-53.74,8.99 L-54.84,8.69 L-56.63,8.46 L-57.88,8.13 L-58.53,7.71 L-58.95,7.24 L-59.18,6.74 L-59.27,6.23 L-59.29,5.71 L-59.17,5.18 L-58.86,4.63 L-58.30,4.08 L-57.16,3.50 L-55.44,2.91 L-54.44,2.38 L-53.75,1.88 L-53.27,1.39 L-52.95,0.92 L-52.76,0.46 L-52.70,0.00 L-52.76,-0.46 L-52.95,-0.92 L-53.27,-1.39 L-53.75,-1.88 L-54.44,-2.38 L-55.44,-2.91 L-57.16,-3.50 L-58.30,-4.08 L-58.86,-4.63 L-59.17,-5.18 L-59.29,-5.71 L-59.27,-6.23 L-59.18,-6.74 L-58.95,-7.24 L-58.53,-7.71 L-57.88,-8.13 L-56.63,-8.46 L-54.84,-8.69 L-53.74,-8.99 L-52.97,-9.34 L-52.39,-9.71 L-51.98,-10.10 L-51.70,-10.52 L-51.55,-10.96 L-51.51,-11.42 L-51.60,-11.91 L-51.81,-12.44 L-52.18,-13.01 L-52.75,-13.64 L-53.63,-14.37 L-55.18,-15.30 L-56.18,-16.11 L-56.61,-16.77 L-56.80,-17.37 L-56.81,-17.91 L-56.68,-18.42 L-56.49,-18.90 L-56.16,-19.34 L-55.65,-19.71 L-54.92,-19.99 L-53.64,-20.05 L-51.83,-19.90 L-50.70,-19.97 L-49.87,-20.15 L-49.23,-20.39 L-48.74,-20.69 L-48.39,-21.04 L-48.14,-21.44 L-48.01,-21.88 L-47.99,-22.38 L-48.09,-22.94 L-48.34,-23.58 L-48.77,-24.31 L-49.47,-25.21 L-50.79,-26.44 L-51.61,-27.44 L-51.88,-28.17 L-51.95,-28.80 L-51.84,-29.33 L-51.62,-29.80 L-51.32,-30.23 L-50.91,-30.59 L-50.34,-30.85 L-49.57,-30.97 L-48.29,-30.77 L-46.56,-30.24 L-45.44,-30.08 L-44.59,-30.07 L-43.91,-30.18 L-43.38,-30.37 L-42.95,-30.64 L-42.64,-30.98 L-42.41,-31.38 L-42.29,-31.87 L-42.27,-32.44 L-42.38,-33.11 L-42.64,-33.92 L-43.15,-34.94 L-44.19,-36.42 L-44.77,-37.57 L-44.89,-38.34 L-44.83,-38.97 L-44.61,-39.47 L-44.29,-39.88 L-43.92,-40.24 L-43.44,-40.51 L-42.82,-40.64 L-42.04,-40.60 L-40.84,-40.14 L-39.26,-39.26 L-38.19,-38.87 L-37.36,-38.69 L-36.68,-38.65 L-36.11,-38.73 L-35.65,-38.90 L-35.26,-39.16 L-34.96,-39.52 L-34.74,-39.96 L-34.61,-40.52 L-34.57,-41.20 L-34.66,-42.05 L-34.94,-43.15 L-35.65,-44.81 L-35.98,-46.06 L-35.94,-46.84 L-35.75,-47.44 L-35.43,-47.88 L-35.03,-48.22 L-34.59,-48.49 L-34.07,-48.65 L-33.44,-48.66 L-32.68,-48.45 L-31.61,-47.75 L-30.24,-46.56 L-29.28,-45.96 L-28.50,-45.61 L-27.84,-45.43 L-27.27,-45.39 L-26.78,-45.46 L-26.35,-45.64 L-25.98,-45.92 L-25.67,-46.31 L-25.43,-46.83 L-25.25,-47.49 L-25.16,-48.33 L-25.21,-49.47 L-25.55,-51.25 L-25.62,-52.53 L-25.42,-53.29 L-25.10,-53.83 L-24.70,-54.20 L-24.24,-54.45 L-23.75,-54.62 L-23.21,-54.67 L-22.59,-54.54 L-21.89,-54.19 L-20.99,-53.28 L-19.90,-51.83 L-19.08,-51.04 L-18.39,-50.54 L-17.79,-50.23 L-17.24,-50.07 L-16.74,-50.04 L-16.29,-50.12 L-15.87,-50.32 L-15.48,-50.64 L-15.13,-51.09 L-14.82,-51.70 L-14.56,-52.51 L-14.37,-53.63 L-14.34,-55.44 L-14.14,-56.71 L-13.78,-57.41 L-13.36,-57.87 L-12.89,-58.15 L-12.39,-58.30 L-11.88,-58.37 L-11.33,-58.30 L-10.76,-58.05 L-10.15,-57.56 L-9.45,-56.48 L-8.69,-54.84 L-8.05,-53.89 L-7.49,-53.26 L-6.96,-52.83 L-6.45,-52.56 L-5.97,-52.42 L-5.51,-52.41 L-5.06,-52.52 L-4.62,-52.75 L-4.18,-53.12 L-3.75,-53.65 L-3.33,-54.39 L-2.91,-55.44 L-2.50,-57.21 L-2.04,-58.41 L-1.55,-59.02 L-1.04,-59.39 L-0.52,-59.56Z M0,-46.5 A46.5,46.5 0 1,0 0,46.5 A46.5,46.5 0 1,0 0,-46.5Z" fill="#333333" fill-rule="evenodd"/><circle cx="0" cy="-42.3" r="10" fill="#333333"/><path d="M-17 -47.5 Q-10 -44.5 -8 -36 L8 -36 Q10 -44.5 17 -47.5 Z" fill="#333333"/><circle cx="0" cy="42.3" r="10" fill="#333333"/><path d="M-17 47.5 Q-10 44.5 -8 36 L8 36 Q10 44.5 17 47.5 Z" fill="#333333"/></g><path d="M-20.800 -17.800Q0 -34.800 20.600 -17.800" fill="none" stroke="#333333" stroke-width="1.300"/><path d="M-22.100 17.400Q0 35 21.900 17.400" fill="none" stroke="#333333" stroke-width="1.300"/><polygon points="0.00,-48.40 1.43,-44.57 5.52,-44.39 2.32,-41.85 3.41,-37.91 0.00,-40.16 -3.41,-37.91 -2.32,-41.85 -5.52,-44.39 -1.43,-44.57" fill="#5ce1d6"/><polygon points="0.00,38.30 1.43,42.13 5.52,42.31 2.32,44.85 3.41,48.79 0.00,46.54 -3.41,48.79 -2.32,44.85 -5.52,42.31 -1.43,42.13" fill="#5ce1d6"/><text x="-24.100" y="30.500" font-size="10.500" font-weight="bold" fill="#333333" text-anchor="middle" transform="rotate(33 -24.100 27.500)" font-family="Liberation Sans, sans-serif" textLength="21" lengthAdjust="spacingAndGlyphs">BIKE</text><text x="23.900" y="30.500" font-size="10.500" font-weight="bold" fill="#333333" text-anchor="middle" transform="rotate(-33 23.900 27.500)" font-family="Liberation Sans, sans-serif" textLength="22" lengthAdjust="spacingAndGlyphs">SHOP</text></svg>
<div class="t" style="left:156.6px;top:258.6px;font-size:22px;color:#333333;transform:scaleX(0.903);-webkit-text-stroke:0.2px #fff;">ADVENTURE</div>
<div class="t" style="left:281.7px;top:258.6px;font-size:22px;color:#333333;transform:scaleX(0.939);font-weight:bold;">WORKS</div>
<div class="r" style="left:399px;top:213.1px;width:247px;height:109.6px;background:#333333;border-radius:14px;"></div>
<div class="t" style="left:425.0px;top:233.9px;font-size:57.5px;color:#5ce1d6;transform:scaleX(1.021);font-weight:bold;">$23.6M</div>
<div class="t" style="left:496.0px;top:297.5px;font-size:12px;color:#ffffff;transform:scaleX(0.939);">REVENUE</div>
<div class="r" style="left:665.3px;top:213.1px;width:247px;height:109.6px;background:#333333;border-radius:14px;"></div>
<div class="t" style="left:705.8px;top:233.9px;font-size:57.5px;color:#5ce1d6;transform:scaleX(1.031);font-weight:bold;">$9.7M</div>
<div class="t" style="left:767.5px;top:298.3px;font-size:12px;color:#ffffff;transform:scaleX(0.927);">PROFIT</div>
<div class="r" style="left:930px;top:213.1px;width:247px;height:109.6px;background:#333333;border-radius:14px;"></div>
<div class="t" style="left:982.0px;top:233.9px;font-size:57.5px;color:#5ce1d6;transform:scaleX(0.965);font-weight:bold;">13.9K</div>
<div class="t" style="left:1030.0px;top:297.5px;font-size:12px;color:#ffffff;transform:scaleX(0.935);">ORDERS</div>
<div class="r" style="left:1196.4px;top:213.1px;width:247px;height:109.6px;background:#333333;border-radius:14px;"></div>
<div class="t" style="left:1256.4px;top:233.9px;font-size:57.5px;color:#5ce1d6;transform:scaleX(0.972);font-weight:bold;">3.1%</div>
<div class="t" style="left:1279.6px;top:297.5px;font-size:12px;color:#ffffff;transform:scaleX(0.952);">RETURN RATE</div>
<div class="t" style="left:1068.5px;top:357.3px;font-size:15px;color:#252423;transform:scaleX(0.963);">Orders by Category</div>
<div class="t" style="left:837.5px;top:415.2px;font-size:14.5px;color:#605e5c;transform:scaleX(0.851);">Accessories</div>
<div class="t" style="left:869.0px;top:457.2px;font-size:14.5px;color:#252423;transform:scaleX(0.905);font-weight:bold;">Bikes</div>
<div class="t" style="left:855.0px;top:499.2px;font-size:14.5px;color:#605e5c;transform:scaleX(0.921);">Clothing</div>
<div class="r" style="left:914px;top:405px;width:476.7px;height:31.7px;background:#adadad;"></div>
<div class="r" style="left:914px;top:447.2px;width:391.2px;height:31.9px;background:#333333;"></div>
<div class="r" style="left:914px;top:489.6px;width:196px;height:31.9px;background:#adadad;"></div>
<div class="t" style="left:1400.6px;top:416.6px;font-size:12px;color:#605e5c;transform:scaleX(0.893);">17.0K</div>
<div class="t" style="left:1315.0px;top:458.7px;font-size:12px;color:#605e5c;transform:scaleX(0.893);">13.9K</div>
<div class="t" style="left:1119.0px;top:500.4px;font-size:12px;color:#605e5c;transform:scaleX(0.891);">7.0K</div>
<div class="t" style="left:845.3px;top:567.1px;font-size:15px;color:#252423;transform:scaleX(0.954);font-weight:bold;">Top 10 Products</div>
<div class="t" style="left:1103.4px;top:567.1px;font-size:15px;color:#252423;transform:scaleX(0.939);font-weight:bold;">Orders</div>
<div class="t" style="left:1203.5px;top:567.1px;font-size:15px;color:#252423;transform:scaleX(0.928);font-weight:bold;">Revenue</div>
<div class="t" style="left:1295.1px;top:567.1px;font-size:15px;color:#252423;transform:scaleX(0.957);font-weight:bold;">Return %</div>
<svg style="left:846px;top:585px" width="9" height="5" viewBox="0 0 9 5"><path d="M0 0h9l-4.500 4.500z" fill="#252423"/></svg>
<div class="r" style="left:840px;top:592px;width:561px;height:1px;background:#c8c6c4;"></div>
<div class="r" style="left:1097px;top:593px;width:1px;height:187px;background:#d2d0ce;"></div>
<div class="r" style="left:1103.5px;top:593px;width:1.5px;height:187px;background:repeating-linear-gradient(180deg,#5a5a5a 0,#5a5a5a 1px,#b5b5b5 1px,#b5b5b5 2px);"></div>
<div class="r" style="left:1289.3px;top:593.3px;width:111.7px;height:18.98px;background:rgb(242,200,205);"></div>
<div class="r" style="left:1105px;top:593.3px;width:47.068px;height:18.98px;background:#cacaca;"></div>
<div class="t" style="left:845.3px;top:596.0px;font-size:15px;color:#605e5c;transform:scaleX(0.932);">Road-750 Black, 58</div>
<div class="t" style="left:1168.5px;top:596.0px;font-size:15px;color:#252423;transform:scaleX(0.939);">328</div>
<div class="t" style="left:1228.0px;top:596.0px;font-size:15px;color:#252423;transform:scaleX(0.905);">$177,117</div>
<div class="t" style="left:1356.5px;top:596.0px;font-size:15px;color:#252423;transform:scaleX(0.917);">2.74%</div>
<div class="r" style="left:1289.3px;top:611.98px;width:111.7px;height:18.98px;background:rgb(239,191,197);"></div>
<div class="r" style="left:1105px;top:611.98px;width:54.9605px;height:18.98px;background:#cacaca;"></div>
<div class="t" style="left:845.3px;top:614.0px;font-size:15px;color:#605e5c;transform:scaleX(0.932);">Road-750 Black, 52</div>
<div class="t" style="left:1168.5px;top:614.0px;font-size:15px;color:#252423;transform:scaleX(0.939);">383</div>
<div class="t" style="left:1227.0px;top:614.0px;font-size:15px;color:#252423;transform:scaleX(0.905);">$206,816</div>
<div class="t" style="left:1356.5px;top:614.0px;font-size:15px;color:#252423;transform:scaleX(0.917);">2.87%</div>
<div class="r" style="left:1289.3px;top:630.66px;width:111.7px;height:18.98px;background:rgb(217,95,109);"></div>
<div class="r" style="left:1105px;top:630.66px;width:50.9425px;height:18.98px;background:#cacaca;"></div>
<div class="t" style="left:845.3px;top:633.0px;font-size:15px;color:#605e5c;transform:scaleX(0.932);">Road-750 Black, 48</div>
<div class="t" style="left:1168.5px;top:633.0px;font-size:15px;color:#252423;transform:scaleX(0.939);">355</div>
<div class="t" style="left:1227.0px;top:633.0px;font-size:15px;color:#252423;transform:scaleX(0.905);">$191,696</div>
<div class="t" style="left:1356.5px;top:633.0px;font-size:15px;color:#252423;transform:scaleX(0.917);">4.23%</div>
<div class="r" style="left:1289.3px;top:649.34px;width:111.7px;height:18.98px;background:rgb(255,255,255);"></div>
<div class="r" style="left:1105px;top:649.34px;width:51.086px;height:18.98px;background:#cacaca;"></div>
<div class="t" style="left:845.3px;top:652.0px;font-size:15px;color:#605e5c;transform:scaleX(0.932);">Road-750 Black, 44</div>
<div class="t" style="left:1168.5px;top:652.0px;font-size:15px;color:#252423;transform:scaleX(0.939);">356</div>
<div class="t" style="left:1227.0px;top:652.0px;font-size:15px;color:#252423;transform:scaleX(0.905);">$192,236</div>
<div class="t" style="left:1356.5px;top:652.0px;font-size:15px;color:#252423;transform:scaleX(0.917);">1.97%</div>
<div class="r" style="left:1289.3px;top:668.02px;width:111.7px;height:18.98px;background:rgb(252,245,246);"></div>
<div class="r" style="left:1105px;top:668.02px;width:81.9385px;height:18.98px;background:#cacaca;"></div>
<div class="t" style="left:845.3px;top:670.0px;font-size:15px;color:#605e5c;transform:scaleX(0.972);">Mountain-200 Silver, 46</div>
<div class="t" style="left:1168.5px;top:670.0px;font-size:15px;color:#252423;transform:scaleX(0.939);">571</div>
<div class="t" style="left:1215.7px;top:670.0px;font-size:15px;color:#252423;transform:scaleX(0.905);">$1,182,781</div>
<div class="t" style="left:1356.5px;top:670.0px;font-size:15px;color:#252423;transform:scaleX(0.917);">2.10%</div>
<div class="r" style="left:1289.3px;top:686.7px;width:111.7px;height:18.98px;background:rgb(242,200,205);"></div>
<div class="r" style="left:1105px;top:686.7px;width:78.4945px;height:18.98px;background:#cacaca;"></div>
<div class="t" style="left:845.3px;top:689.0px;font-size:15px;color:#605e5c;transform:scaleX(0.972);">Mountain-200 Silver, 42</div>
<div class="t" style="left:1168.5px;top:689.0px;font-size:15px;color:#252423;transform:scaleX(0.939);">547</div>
<div class="t" style="left:1215.7px;top:689.0px;font-size:15px;color:#252423;transform:scaleX(0.905);">$1,133,067</div>
<div class="t" style="left:1356.5px;top:689.0px;font-size:15px;color:#252423;transform:scaleX(0.917);">2.74%</div>
<div class="r" style="left:1289.3px;top:705.38px;width:111.7px;height:18.98px;background:rgb(239,189,195);"></div>
<div class="r" style="left:1105px;top:705.38px;width:84.091px;height:18.98px;background:#cacaca;"></div>
<div class="t" style="left:845.3px;top:708.0px;font-size:15px;color:#605e5c;transform:scaleX(0.972);">Mountain-200 Silver, 38</div>
<div class="t" style="left:1168.5px;top:708.0px;font-size:15px;color:#252423;transform:scaleX(0.939);">586</div>
<div class="t" style="left:1215.7px;top:708.0px;font-size:15px;color:#252423;transform:scaleX(0.905);">$1,213,852</div>
<div class="t" style="left:1356.5px;top:708.0px;font-size:15px;color:#252423;transform:scaleX(0.917);">2.90%</div>
<div class="r" style="left:1289.3px;top:724.06px;width:111.7px;height:18.98px;background:rgb(238,184,190);"></div>
<div class="r" style="left:1105px;top:724.06px;width:86.961px;height:18.98px;background:#cacaca;"></div>
<div class="t" style="left:845.3px;top:726.0px;font-size:15px;color:#605e5c;transform:scaleX(0.972);">Mountain-200 Black, 46</div>
<div class="t" style="left:1168.5px;top:726.0px;font-size:15px;color:#252423;transform:scaleX(0.939);">606</div>
<div class="t" style="left:1215.7px;top:726.0px;font-size:15px;color:#252423;transform:scaleX(0.905);">$1,241,754</div>
<div class="t" style="left:1356.5px;top:726.0px;font-size:15px;color:#252423;transform:scaleX(0.917);">2.97%</div>
<div class="r" style="left:1289.3px;top:742.74px;width:111.7px;height:18.98px;background:rgb(229,148,157);"></div>
<div class="r" style="left:1105px;top:742.74px;width:86.387px;height:18.98px;background:#cacaca;"></div>
<div class="t" style="left:845.3px;top:745.0px;font-size:15px;color:#605e5c;transform:scaleX(0.972);">Mountain-200 Black, 42</div>
<div class="t" style="left:1168.5px;top:745.0px;font-size:15px;color:#252423;transform:scaleX(0.939);">602</div>
<div class="t" style="left:1215.7px;top:745.0px;font-size:15px;color:#252423;transform:scaleX(0.905);">$1,233,557</div>
<div class="t" style="left:1356.5px;top:745.0px;font-size:15px;color:#252423;transform:scaleX(0.917);">3.49%</div>
<div class="r" style="left:1289.3px;top:761.42px;width:111.7px;height:18.98px;background:rgb(243,207,212);"></div>
<div class="r" style="left:1105px;top:761.42px;width:81.6515px;height:18.98px;background:#cacaca;"></div>
<div class="t" style="left:845.3px;top:764.0px;font-size:15px;color:#605e5c;transform:scaleX(0.972);">Mountain-200 Black, 38</div>
<div class="t" style="left:1168.5px;top:764.0px;font-size:15px;color:#252423;transform:scaleX(0.939);">569</div>
<div class="t" style="left:1215.7px;top:764.0px;font-size:15px;color:#252423;transform:scaleX(0.905);">$1,165,937</div>
<div class="t" style="left:1356.5px;top:764.0px;font-size:15px;color:#252423;transform:scaleX(0.917);">2.64%</div>
<div class="t" style="left:842.7px;top:837.6px;font-size:15px;color:#252423;transform:scaleX(0.973);">Most Ordered Product Type:</div>
<div class="t" style="left:1152.8px;top:837.6px;font-size:15px;color:#252423;transform:scaleX(0.964);">Most Returned Product Type:</div>
<div class="r" style="left:835.8px;top:862px;width:296.3px;height:53.4px;background:#333333;"></div>
<div class="r" style="left:1146.9px;top:861px;width:296.9px;height:54.4px;background:#333333;"></div>
<div class="t" style="left:932.0px;top:876.0px;font-size:22px;color:#5ce1d6;transform:scaleX(0.876);font-weight:bold;">Road Bikes</div>
<div class="t" style="left:1230.6px;top:875.0px;font-size:22px;color:#5ce1d6;transform:scaleX(0.900);font-weight:bold;">Touring Bikes</div>
<!-- p_line -->
<div class="t" style="left:415.9px;top:357.0px;font-size:15px;color:#252423;transform:scaleX(0.938);">Revenue Trending</div>
<div class="t" style="left:133.5px;top:426.5px;font-size:12px;color:#605e5c;transform:scaleX(0.960);">$1.5M</div>
<div class="t" style="left:133.5px;top:536.5px;font-size:12px;color:#605e5c;transform:scaleX(0.960);">$1.0M</div>
<div class="t" style="left:133.5px;top:647.0px;font-size:12px;color:#605e5c;transform:scaleX(0.960);">$0.5M</div>
<div class="t" style="left:164.8px;top:698.2px;font-size:12px;color:#605e5c;transform:scaleX(0.922);">Jan 2020</div>
<div class="t" style="left:289.8px;top:698.2px;font-size:12px;color:#605e5c;transform:scaleX(1.003);">Jul 2020</div>
<div class="t" style="left:415.2px;top:698.2px;font-size:12px;color:#605e5c;transform:scaleX(0.922);">Jan 2021</div>
<div class="t" style="left:539.2px;top:698.2px;font-size:12px;color:#605e5c;transform:scaleX(1.003);">Jul 2021</div>
<div class="t" style="left:665.5px;top:698.2px;font-size:12px;color:#605e5c;transform:scaleX(0.922);">Jan 2022</div>
<svg style="left:0;top:0" width="1916" height="1080" viewBox="0 0 1916 1080"><defs><clipPath id="cpl"><rect x="140" y="388.500" width="680" height="304"/></clipPath></defs><g clip-path="url(#cpl)"><polygon points="187.3,617.4 208.2,643.9 229.0,604.9 249.9,616.3 270.7,604.1 291.6,608.5 312.4,644.3 333.3,641.8 354.1,673.5 375.0,671.6 395.8,676.1 416.7,637.4 437.5,653.3 458.4,655.1 479.2,652.0 500.1,639.3 520.9,639.4 541.8,630.2 562.7,586.2 583.5,591.1 604.4,561.1 625.2,555.7 646.1,515.5 666.9,431.1 687.8,485.5 708.6,487.3 729.5,447.5 750.3,447.3 771.2,379.1 792.0,382.8 792.0,408.8 771.2,405.1 750.3,474.3 729.5,476.5 708.6,515.3 687.8,511.5 666.9,459.3 646.1,540.0 625.2,578.7 604.4,584.5 583.5,611.8 562.7,607.2 541.8,647.9 520.9,658.6 500.1,657.7 479.2,670.3 458.4,673.5 437.5,671.0 416.7,654.5 395.8,692.4 375.0,689.8 354.1,690.5 333.3,660.5 312.4,662.8 291.6,627.5 270.7,622.7 249.9,635.3 229.0,624.7 208.2,662.6 187.3,641.1" fill="#f6edc6"/><path d="M218.6 692.4L792 472.2" stroke="#c6c6c6" stroke-width="2.100" stroke-dasharray="6 5.500" fill="none"/><polyline points="187.3,634.1 208.2,645.9 229.0,621.2 249.9,619.3 270.7,617.7 291.6,615.5 312.4,655.8 333.3,644.8 354.1,687.5 375.0,674.1 395.8,690.9 416.7,639.1 437.5,667.7 458.4,658.9 479.2,659.3 500.1,653.9 520.9,642.9 541.8,645.9 562.7,589.2 583.5,607.8 604.4,575.5 625.2,558.7 646.1,536.2 666.9,430.3 687.8,506.5 708.6,491.3 729.5,469.5 750.3,451.3 771.2,402.1 792.0,388.8" fill="none" stroke="#252423" stroke-width="2.300" stroke-linejoin="miter"/></g><path d="M667 388v304" stroke="#605e5c" stroke-width="1"/><path d="M667 430.500l-5-7.500a7.200 7.200 0 1 1 10 0z" fill="#323130"/><circle cx="667" cy="430.500" r="3" fill="#323130"/><rect x="127" y="355.500" width="693" height="385.500" fill="none" stroke="#4f4d4b" stroke-width="1"/><circle cx="127" cy="355.5" r="5" fill="#fff" stroke="#605e5c" stroke-width="1"/><circle cx="473.5" cy="355.5" r="5" fill="#fff" stroke="#605e5c" stroke-width="1"/><circle cx="820" cy="355.5" r="5" fill="#fff" stroke="#605e5c" stroke-width="1"/><circle cx="127" cy="548" r="5" fill="#fff" stroke="#605e5c" stroke-width="1"/><circle cx="820" cy="548" r="5" fill="#fff" stroke="#605e5c" stroke-width="1"/><circle cx="127" cy="741" r="5" fill="#fff" stroke="#605e5c" stroke-width="1"/><circle cx="473.5" cy="741" r="5" fill="#fff" stroke="#605e5c" stroke-width="1"/><circle cx="820" cy="741" r="5" fill="#fff" stroke="#605e5c" stroke-width="1"/><path d="M188 729.500h603" stroke="#3b3a39" stroke-width="3"/><circle cx="187.500" cy="729.500" r="7.500" fill="#fff" stroke="#3b3a39" stroke-width="2"/><circle cx="791" cy="729.500" r="7.500" fill="#fff" stroke="#3b3a39" stroke-width="2"/><g fill="none" stroke="#605e5c" stroke-width="1.100"><path d="M742.500 362.500h14l-5.500 6.500v6h-3v-6z"/><path d="M776 364.500h-4.500v9.500h12.500v-4 M771.500 369.500h5.500v4.500 M779 362.500h5.500v5.500 M784.500 362.500l-5.500 5.500" stroke="#8a8886"/></g><g fill="#605e5c"><circle cx="800.500" cy="368" r="1.300"/><circle cx="806" cy="368" r="1.300"/><circle cx="811.500" cy="368" r="1.300"/></g></svg>
<div class="r" style="left:685px;top:405px;width:240px;height:132.5px;background:rgba(51,51,51,0.93);box-shadow:0 2px 8px rgba(0,0,0,0.25);"></div>
<svg style="left:677px;top:411px" width="9" height="16" viewBox="0 0 9 16"><path d="M9 0v16l-8.500-8z" fill="rgba(51,51,51,0.93)"/></svg>
<div class="t" style="left:701.5px;top:422.7px;font-size:14.5px;color:#5ce1d6;transform:scaleX(1.030);font-weight:bold;letter-spacing:0.6px;">12/1/2021</div>
<div class="t" style="left:751.9px;top:445.1px;font-size:14px;color:#ffffff;transform:scaleX(0.912);-webkit-text-stroke:0.25px #fff;">Total Revenue</div>
<div class="t" style="left:846.0px;top:445.1px;font-size:14px;color:#5ce1d6;transform:scaleX(0.913);-webkit-text-stroke:0.2px #5ce1d6;">$1,511,134</div>
<div class="t" style="left:746.2px;top:465.2px;font-size:14px;color:#ffffff;transform:scaleX(0.912);-webkit-text-stroke:0.25px #fff;">Expected value</div>
<div class="t" style="left:846.0px;top:465.2px;font-size:14px;color:#5ce1d6;transform:scaleX(0.899);-webkit-text-stroke:0.2px #5ce1d6;">$1,443,127</div>
<div class="t" style="left:722.1px;top:485.3px;font-size:14px;color:#ffffff;transform:scaleX(0.912);-webkit-text-stroke:0.25px #fff;">Expected min value</div>
<div class="t" style="left:846.0px;top:485.3px;font-size:14px;color:#5ce1d6;transform:scaleX(0.899);-webkit-text-stroke:0.2px #5ce1d6;">$1,378,564</div>
<div class="t" style="left:718.5px;top:505.3px;font-size:14px;color:#ffffff;transform:scaleX(0.912);-webkit-text-stroke:0.25px #fff;">Expected max value</div>
<div class="t" style="left:846.0px;top:505.3px;font-size:14px;color:#5ce1d6;transform:scaleX(0.899);-webkit-text-stroke:0.2px #5ce1d6;">$1,507,689</div>
<!-- p_cards -->
<svg style="left:0;top:0" width="1916" height="1080" viewBox="0 0 1916 1080"><polygon points="132.9,917.8 132.9,895.3 139.8,900.0 146.7,890.2 153.6,889.5 160.5,888.8 167.3,888.0 174.2,903.9 181.1,899.6 188.0,916.5 194.9,911.2 201.8,917.8 208.7,897.3 215.6,908.6 222.5,905.1 229.4,905.3 236.2,903.2 243.1,898.8 250.0,900.0 256.9,877.6 263.8,884.9 270.7,872.2 277.6,865.5 284.5,856.6 291.4,814.7 298.3,844.9 305.1,838.8 312.0,830.2 318.9,823.0 325.8,803.6 332.7,798.3 332.7,917.8" fill="#ebebeb"/><polygon points="370.5,917.8 370.5,917.3 377.2,916.5 383.9,914.5 390.6,913.8 397.3,913.3 404.0,912.3 410.7,909.0 417.4,905.2 424.2,912.8 430.9,910.2 437.6,913.5 444.3,899.2 451.0,909.7 457.7,908.2 464.4,907.2 471.1,904.2 477.8,900.2 484.5,897.7 491.2,877.7 497.9,879.2 504.6,865.2 511.3,858.9 518.1,848.1 524.8,813.8 531.5,842.6 538.2,838.9 544.9,830.1 551.6,822.6 558.3,803.8 565.0,798.8 565.0,917.8" fill="#ebebeb"/><polygon points="601.8,917.8 601.8,912.3 608.6,911.5 615.5,895.2 622.3,878.2 629.2,890.2 636.0,910.2 642.9,915.3 649.7,905.2 656.6,917.3 663.4,892.7 670.3,907.7 677.1,886.5 684.0,897.7 690.8,897.7 697.7,892.7 704.5,907.7 711.4,895.2 718.2,897.7 725.1,889.0 731.9,865.2 738.8,847.6 745.6,838.9 752.5,841.4 759.3,838.9 766.2,877.7 773.0,850.1 779.9,832.6 786.7,798.8 793.6,805.0 800.4,811.3 800.4,917.8" fill="#ebebeb"/><path d="M291 850.500l4 4.500 8.500-9" fill="none" stroke="#333" stroke-width="1.600"/><path d="M518.9 850.500l4 4.500 8.500-9" fill="none" stroke="#333" stroke-width="1.600"/><path d="M719.5 850.500l4 4.500 8.500-9" fill="none" stroke="#333" stroke-width="1.600"/></svg>
<div class="t" style="left:176.9px;top:775.5px;font-size:15px;color:#252423;transform:scaleX(0.963);">Monthly Revenue</div>
<div class="t" style="left:417.8px;top:775.5px;font-size:15px;color:#252423;transform:scaleX(0.986);">Monthly Orders</div>
<div class="t" style="left:648.1px;top:775.5px;font-size:15px;color:#252423;transform:scaleX(0.978);">Monthly Returns</div>
<div class="t" style="left:161.0px;top:829.1px;font-size:45.5px;color:#333333;transform:scaleX(1.024);font-weight:bold;">$1.7M</div>
<div class="t" style="left:406.0px;top:829.1px;font-size:45.5px;color:#333333;transform:scaleX(0.979);font-weight:bold;">1,157</div>
<div class="t" style="left:669.5px;top:829.1px;font-size:45.5px;color:#333333;transform:scaleX(0.958);font-weight:bold;">34</div>
<div class="t" style="left:145.0px;top:879.8px;font-size:13px;color:#252423;transform:scaleX(0.994);">Prev. Month: $1.64M (+3.75%)</div>
<div class="t" style="left:387.7px;top:879.8px;font-size:13px;color:#252423;transform:scaleX(1.003);">Prev. Month: 1116 (+3.67%)</div>
<div class="t" style="left:624.5px;top:879.8px;font-size:13px;color:#252423;transform:scaleX(0.991);">Prev. Month: $36 (+5.56%)</div>
<!-- p_right -->
<svg style="left:1504px;top:165px" width="30" height="120" viewBox="1504 165 30 120" fill="none" stroke="#252423" stroke-width="1.300"><path d="M1518 173.500l-5.500 5.700 5.500 5.700 M1524 173.500l-5.500 5.700 5.500 5.700" stroke-width="1.400"/><path d="M1525 202v11l-6-4h-4l-1.200-1.500 1.200-1.500h4z" stroke-width="1.300"/></svg>
<div class="t" style="left:1510.7px;top:222.4px;font-size:14px;color:#252423;transform-origin:0 0;transform:rotate(90deg) translate(0,-100%) scaleX(1.089);-webkit-text-stroke:0.35px #252423;">Filters</div>
<div class="t" style="left:1543.2px;top:171.7px;font-size:16px;color:#252423;transform:scaleX(1.007);-webkit-text-stroke:0.3px #252423;">Anomalies</div>
<svg style="left:1840px;top:170px" width="44" height="20" viewBox="1840 170 44 20" fill="none" stroke="#252423" stroke-width="1.300"><path d="M1844.500 176.500l6.500 6.500 6.500-6.500"/><path d="M1867.500 173.500l12 12 M1879.500 173.500l-12 12"/></svg>
<div class="r" style="left:1879px;top:197px;width:8px;height:680px;background:#c8c6c4;"></div>
<div class="r" style="left:1543px;top:197.3px;width:336px;height:255.5px;background:#ffffff;"></div>
<div class="t" style="left:1544.5px;top:238.2px;font-size:11px;color:#605e5c;transform:scaleX(0.939);">$1.5M</div>
<div class="t" style="left:1544.5px;top:317.5px;font-size:11px;color:#605e5c;transform:scaleX(0.939);">$1.0M</div>
<div class="t" style="left:1544.5px;top:396.1px;font-size:11px;color:#605e5c;transform:scaleX(0.939);">$0.5M</div>
<div class="t" style="left:1581.8px;top:434.0px;font-size:11px;color:#605e5c;transform:scaleX(0.960);">2020</div>
<div class="t" style="left:1695.5px;top:434.0px;font-size:11px;color:#605e5c;transform:scaleX(0.960);">2021</div>
<div class="t" style="left:1809.0px;top:434.0px;font-size:11px;color:#605e5c;transform:scaleX(0.960);">2022</div>
<svg style="left:0;top:0" width="1916" height="1080" viewBox="0 0 1916 1080"><polygon points="1592.8,375.6 1602.3,394.6 1611.7,366.7 1621.2,374.8 1630.7,366.1 1640.2,369.3 1649.6,394.9 1659.1,393.1 1668.6,415.8 1678.0,414.5 1687.5,417.7 1697.0,390.0 1706.5,401.3 1715.9,402.6 1725.4,400.4 1734.9,391.3 1744.4,391.4 1753.8,384.8 1763.3,353.3 1772.8,356.8 1782.2,335.3 1791.7,331.4 1801.2,302.6 1810.7,242.2 1820.1,281.2 1829.6,282.4 1839.1,253.9 1848.5,253.8 1858.0,205.0 1867.5,207.6 1867.5,226.2 1858.0,223.6 1848.5,273.1 1839.1,274.7 1829.6,302.5 1820.1,299.8 1810.7,262.4 1801.2,320.2 1791.7,347.9 1782.2,352.1 1772.8,371.6 1763.3,368.3 1753.8,397.5 1744.4,405.1 1734.9,404.5 1725.4,413.5 1715.9,415.8 1706.5,414.0 1697.0,402.2 1687.5,429.3 1678.0,427.5 1668.6,428.0 1659.1,406.5 1649.6,408.1 1640.2,382.9 1630.7,379.4 1621.2,388.5 1611.7,380.9 1602.3,408.0 1592.8,392.6" fill="#f6edc6"/><path d="M1606 430L1864 275.500" stroke="#c6c6c6" stroke-width="1.800" stroke-dasharray="5 4.500" fill="none"/><polyline points="1592.8,387.6 1602.3,396.0 1611.7,378.4 1621.2,377.0 1630.7,375.8 1640.2,374.3 1649.6,403.1 1659.1,395.3 1668.6,425.8 1678.0,416.2 1687.5,428.3 1697.0,391.2 1706.5,411.7 1715.9,405.4 1725.4,405.6 1734.9,401.8 1744.4,393.9 1753.8,396.0 1763.3,355.4 1772.8,368.8 1782.2,345.6 1791.7,333.6 1801.2,317.5 1810.7,241.6 1820.1,296.2 1829.6,285.3 1839.1,269.7 1848.5,256.7 1858.0,221.4 1867.5,211.9" fill="none" stroke="#252423" stroke-width="1.800" stroke-linejoin="miter"/><path d="M1810.7 240.500l-4.500-6a6.200 6.200 0 1 1 9 0z" fill="#252423"/><circle cx="1854.600" cy="593.500" r="6.500" fill="none" stroke="#252423" stroke-width="1"/><path d="M1854.600 592v5" stroke="#252423" stroke-width="1.200"/><circle cx="1854.600" cy="590" r="0.800" fill="#252423"/><path d="M1552.500 621l4.500 4.500 4.500-4.500" fill="none" stroke="#252423" stroke-width="1.100"/></svg>
<div class="t" style="left:1551.1px;top:468.8px;font-size:14px;color:#323130;transform:scaleX(0.982);">Total Revenue was unexpectedly high on</div>
<div class="t" style="left:1551.1px;top:488.9px;font-size:14px;color:#323130;transform:scaleX(0.985);">12/1/2021. It had a value of $1,511,134, which is</div>
<div class="t" style="left:1551.1px;top:508.9px;font-size:14px;color:#323130;transform:scaleX(0.987);">above the expected range of $1,378,564 -</div>
<div class="t" style="left:1551.1px;top:529.0px;font-size:14px;color:#323130;transform:scaleX(0.940);">$1,507,689.</div>
<div class="t" style="left:1551.1px;top:563.6px;font-size:17px;color:#252423;transform:scaleX(0.941);-webkit-text-stroke:0.35px #252423;">Possible explanations</div>
<div class="t" style="left:1792.3px;top:588.3px;font-size:13px;color:#252423;transform:scaleX(0.946);-webkit-text-stroke:0.25px #252423;">Strength</div>
<div class="t" style="left:1567.5px;top:617.8px;font-size:13px;color:#252423;transform:scaleX(0.943);">'Country' is United States</div>
<div class="r" style="left:1551px;top:654px;width:257px;height:4px;background:#c8c6c4;"></div>
<div class="r" style="left:1551px;top:654px;width:93px;height:4px;background:#2f8bf5;"></div>
<div class="t" style="left:1824.4px;top:650.0px;font-size:13px;color:#252423;transform:scaleX(0.872);">36%</div>
<div class="r" style="left:1551px;top:684px;width:312.2px;height:323px;background:#ffffff;border-radius:2px 2px 0 0;box-shadow:0 0 2px rgba(0,0,0,0.12);"></div>
<div class="t" style="left:1565.2px;top:696.1px;font-size:12px;color:#252423;transform:scaleX(0.975);">Total Revenue for Country United States was</div>
<div class="t" style="left:1565.2px;top:712.2px;font-size:12px;color:#252423;transform:scaleX(0.998);">unusually high, which may have lifted the Total</div>
<div class="t" style="left:1565.2px;top:728.3px;font-size:12px;color:#252423;transform:scaleX(0.968);">Revenue total.</div>
<div class="t" style="left:1604.0px;top:770.8px;font-size:12px;color:#605e5c;transform:scaleX(0.950);">Total Revenue</div>
<div class="t" style="left:1694.7px;top:770.8px;font-size:12px;color:#605e5c;transform:scaleX(0.968);">Total Revenue for Uni...</div>
<div class="t" style="left:1591.6px;top:792.4px;font-size:12px;color:#605e5c;transform:scaleX(0.998);">$2M</div>
<div class="t" style="left:1591.6px;top:865.3px;font-size:12px;color:#605e5c;transform:scaleX(0.998);">$1M</div>
<div class="t" style="left:1591.6px;top:938.5px;font-size:12px;color:#605e5c;transform:scaleX(0.998);">$0M</div>
<div class="t" style="left:1790.3px;top:847.5px;font-size:12px;color:#605e5c;transform:scaleX(0.963);">$0.5M</div>
<div class="t" style="left:1790.3px;top:938.5px;font-size:12px;color:#605e5c;transform:scaleX(0.963);">$0.0M</div>
<div class="t" style="left:1622.8px;top:950.3px;font-size:12px;color:#605e5c;transform:scaleX(0.955);">2020</div>
<div class="t" style="left:1678.2px;top:950.3px;font-size:12px;color:#605e5c;transform:scaleX(0.955);">2021</div>
<div class="t" style="left:1734.5px;top:950.3px;font-size:12px;color:#605e5c;transform:scaleX(0.955);">2022</div>
<svg style="left:0;top:0" width="1916" height="1080" viewBox="0 0 1916 1080"><circle cx="1596.500" cy="776.700" r="4.500" fill="#3e95ff"/><circle cx="1687.500" cy="776.700" r="4.500" fill="#12239e"/><path d="M1625 799.4h152" stroke="#c8c6c4" stroke-width="1" stroke-dasharray="1 3"/><path d="M1625 872.3h152" stroke="#c8c6c4" stroke-width="1" stroke-dasharray="1 3"/><path d="M1625 945.2h152" stroke="#c8c6c4" stroke-width="1" stroke-dasharray="1 3"/><path d="M1780 854.200h2" stroke="#c8c6c4" stroke-width="1"/><path d="M1635.5 799v146" stroke="#c8c6c4" stroke-width="1" stroke-dasharray="1 3"/><path d="M1690.9 799v146" stroke="#c8c6c4" stroke-width="1" stroke-dasharray="1 3"/><path d="M1747.2 799v146" stroke="#c8c6c4" stroke-width="1" stroke-dasharray="1 3"/><path d="M1742 799v146" stroke="#666666" stroke-width="3" stroke-dasharray="4 3"/><polyline points="1635.0,902.6 1639.7,906.5 1644.3,898.3 1649.0,897.7 1653.6,897.2 1658.3,896.4 1662.9,909.7 1667.6,906.1 1672.2,920.2 1676.9,915.8 1681.5,921.3 1686.2,904.2 1690.8,913.7 1695.5,910.8 1700.1,910.9 1704.8,909.1 1709.4,905.5 1714.1,906.5 1718.7,887.7 1723.4,893.9 1728.0,883.2 1732.7,877.7 1737.3,870.2 1742.0,835.2 1746.6,860.4 1751.3,855.4 1756.0,848.2 1760.6,842.2 1765.3,825.9 1769.9,821.5" fill="none" stroke="#3e95ff" stroke-width="1.300"/><polyline points="1635.0,907.1 1639.7,927.4 1644.3,902.2 1649.0,900.8 1653.6,891.3 1658.3,896.4 1662.9,910.2 1667.6,911.7 1672.2,930.3 1676.9,931.5 1681.5,926.6 1686.2,920.0 1690.8,927.4 1695.5,928.6 1700.1,930.6 1704.8,926.0 1709.4,919.4 1714.1,921.4 1718.7,904.2 1723.4,900.8 1728.0,903.3 1732.7,892.1 1737.3,882.7 1742.0,837.6 1746.6,879.8 1751.3,872.0 1756.0,864.0 1760.6,862.0 1765.3,830.4 1769.9,839.0" fill="none" stroke="#1b2a9e" stroke-width="1.300"/></svg>
<div class="r" style="left:1560px;top:990px;width:120px;height:17px;overflow:hidden;"><div class="t" style="left:5.2px;top:7.6px;font-size:12px;color:#1f6f5c;transform:scaleX(1.039);">Add to report</div></div>
<div class="r" style="left:1534px;top:1007px;width:353px;height:9px;background:#f3f2f1;"></div>
<div class="r" style="left:1888px;top:983px;width:28px;height:1px;background:#e1dfdd;"></div>
<div class="r" style="left:1534px;top:1015px;width:382px;height:1px;background:#e1dfdd;"></div>
<div class="r" style="left:1888px;top:224.5px;width:28px;height:30px;background:#e1dfdd;border:1px solid #a19f9d;border-right:none;box-sizing:border-box;"></div>
<svg style="left:1887px;top:160px" width="29" height="856" viewBox="1887 160 29 856" fill="none" stroke="#3b3a39" stroke-width="1.100"><path d="M1897.500 171v13c0 1.500 3 2.500 6.500 2.500s6.500-1 6.500-2.500v-13"/><ellipse cx="1904" cy="171" rx="6.500" ry="2.500"/><path d="M1896.500 213.500v-7.500h3.500 M1900 213.500v-13.500h4.500v6 M1904.500 206h3.500v2.500 M1896.500 213.500h5"/><path d="M1912.500 204.500l-6.500 8" stroke="#3b3a39" stroke-width="1.600"/><path d="M1906.500 211.500l1.800 1.500c-1 2.500-3.500 4-6.800 3.700 2-.8 2.500-3.700 5-5.200z" fill="#2b7cd3" stroke="#2b7cd3" stroke-width="0.600"/><path d="M1895.500 231v17.500h17"/><path d="M1896 242l6-7 5 4 6-6" stroke-width="1.200"/><circle cx="1910" cy="245.500" r="3" stroke="#2b7cd3" fill="#e1dfdd"/><circle cx="1910" cy="245.500" r="1" fill="#2b7cd3" stroke="none"/><path d="M1898.500 263.500h11v16l-5.500-4.500-5.500 4.500z"/><rect x="1904.500" y="296.500" width="8" height="8" fill="#f8d7a8" stroke="#e8a33d"/><rect x="1895.500" y="303.500" width="10" height="8" fill="#faf9f8"/><path d="M1906 302l0 10 2.500-2.500 2 4 1.500-1-2-3.500 3.500-0.500z" fill="#fff" stroke="#252423" stroke-width="0.900"/><path d="M1904 327.500v17 M1895.500 336h17" stroke-width="1.300"/><circle cx="1904" cy="999.800" r="3" /><path d="M1902.500 991.500h3l.7 2.300 2 1.100 2.300-.6 1.500 2.600-1.600 1.800v2.200l1.600 1.800-1.500 2.600-2.300-.6-2 1.100-.7 2.300h-3l-.7-2.300-2-1.100-2.300.6-1.500-2.600 1.600-1.800v-2.200l-1.600-1.800 1.500-2.600 2.300.6 2-1.100z" stroke-width="1.100"/></svg>
<!-- p_bottom -->
<svg style="left:0;top:160px" width="40" height="130" viewBox="0 160 40 130" fill="none" stroke="#252423" stroke-width="1.200"><path d="M14.500 173v13.500h13.500"/><rect x="16.800" y="176.500" width="2.400" height="8"/><rect x="20.800" y="178.500" width="2.400" height="6"/><rect x="24.800" y="174.500" width="2.400" height="10"/><g stroke="#605e5c" stroke-width="1"><rect x="13.500" y="212.500" width="15" height="14"/><path d="M13.500 216.500h15 M13.500 220h15 M13.500 223.500h15 M18.500 212.500v14 M23.500 212.500v14"/></g><g stroke="#605e5c" stroke-width="1"><rect x="21.500" y="251.500" width="8" height="4"/><rect x="12.500" y="256.500" width="8" height="6"/><rect x="21.500" y="259" width="8" height="4"/><rect x="21.500" y="265.500" width="8" height="3.500"/><path d="M20.500 259.500h-3 M17.500 253.500h4 M17.500 253.500v3 M17.500 262.500v4.500h4 M20.500 261h1"/></g></svg>
<div class="r" style="left:0px;top:1015px;width:1534px;height:1px;background:#dddbd9;"></div>
<div class="r" style="left:167.4px;top:980px;width:128.2px;height:35px;background:#ffffff;"></div>
<div class="r" style="left:167.4px;top:1011.3px;width:128.2px;height:3.5px;background:#2b7d66;"></div>
<div class="r" style="left:295.6px;top:981px;width:1px;height:34px;background:#d2d0ce;"></div>
<div class="r" style="left:359.3px;top:981px;width:1px;height:34px;background:#d2d0ce;"></div>
<div class="r" style="left:476.5px;top:981px;width:1px;height:34px;background:#d2d0ce;"></div>
<div class="r" style="left:602.8px;top:981px;width:1px;height:34px;background:#d2d0ce;"></div>
<div class="r" style="left:730.5px;top:981px;width:1px;height:34px;background:#d2d0ce;"></div>
<div class="r" style="left:798.2px;top:981px;width:1px;height:34px;background:#d2d0ce;"></div>
<div class="r" style="left:944.5px;top:981px;width:1px;height:34px;background:#d2d0ce;"></div>
<div class="r" style="left:1065.3px;top:981px;width:1px;height:34px;background:#d2d0ce;"></div>
<div class="r" style="left:1229.5px;top:981px;width:1px;height:34px;background:#d2d0ce;"></div>
<div class="t" style="left:188.4px;top:991.5px;font-size:12.5px;color:#252423;transform:scaleX(0.933);">Exec Dashboard</div>
<div class="t" style="left:316.2px;top:991.5px;font-size:12.5px;color:#252423;transform:scaleX(0.967);">Map</div>
<div class="t" style="left:380.8px;top:991.5px;font-size:12.5px;color:#252423;transform:scaleX(0.958);">Product Detail</div>
<div class="t" style="left:497.0px;top:991.5px;font-size:12.5px;color:#252423;transform:scaleX(0.945);">Customer Detail</div>
<div class="t" style="left:631.3px;top:991.5px;font-size:12.5px;color:#252423;transform:scaleX(0.968);">Category Tooltip</div>
<div class="t" style="left:751.6px;top:991.5px;font-size:12.5px;color:#252423;transform:scaleX(0.985);">Q&amp;A</div>
<div class="t" style="left:819.2px;top:991.5px;font-size:12.5px;color:#252423;transform:scaleX(0.946);">Decomposition Tree</div>
<div class="t" style="left:966.0px;top:991.5px;font-size:12.5px;color:#252423;transform:scaleX(0.915);">Key Influencers</div>
<div class="t" style="left:1086.7px;top:991.5px;font-size:12.5px;color:#252423;transform:scaleX(0.952);">Previous Month Orders</div>
<svg style="left:614px;top:993px" width="13" height="11" viewBox="0 0 13 11" fill="none" stroke="#605e5c" stroke-width="1"><path d="M1 6c2-3.500 8-4 11 0"/><circle cx="6.500" cy="6.500" r="2"/><path d="M1.500 1l10 9.500"/></svg>
<div class="r" style="left:1230px;top:982px;width:39px;height:32px;background:#2b7d66;"></div>
<svg style="left:1243px;top:991.500px" width="13" height="13" viewBox="0 0 13 13" stroke="#fff" stroke-width="2.400"><path d="M6.500 1v11 M1 6.500h11"/></svg>
<svg style="left:40px;top:980px" width="130" height="36" viewBox="40 980 130 36" fill="none" stroke="#252423" stroke-width="1.200"><rect x="52.500" y="988" width="19" height="11.500" stroke-width="1.500"/><path d="M58 1002.500h8 M62 999.500v3" stroke-width="1.500"/><rect x="100.500" y="984.500" width="11" height="21" rx="1.500" stroke="#605e5c"/><circle cx="106" cy="1002.500" r="0.700" fill="#605e5c"/><path d="M138 994.500l-4 3.200 4 3.200z M155.500 994.500l4 3.200-4 3.200z" fill="#c8c6c4" stroke="none"/></svg>
<div class="r" style="left:50.6px;top:1007.7px;width:23.4px;height:2.9px;background:#2b7d66;border-radius:1.500px;"></div>
<div class="t" style="left:5.5px;top:1022.1px;font-size:12px;color:#484644;transform:scaleX(0.961);">Page 1 of 9</div>
<div class="t" style="left:1515.5px;top:1021.8px;font-size:12px;color:#252423;transform:scaleX(1.000);">-</div>
<div class="r" style="left:1524px;top:1026.5px;width:100px;height:1px;background:#605e5c;"></div>
<div class="r" style="left:1574.8px;top:1021px;width:3.5px;height:12px;background:#3b3a39;"></div>
<div class="t" style="left:1630.5px;top:1021.0px;font-size:13px;color:#484644;transform:scaleX(1.000);">+</div>
<div class="t" style="left:1652.1px;top:1022.1px;font-size:12px;color:#484644;transform:scaleX(0.940);">110%</div>
<svg style="left:1693px;top:1021px" width="16" height="12" viewBox="0 0 16 12" fill="none" stroke="#605e5c" stroke-width="1"><rect x="0.500" y="0.500" width="15" height="11"/><path d="M3 5v-2.500h2.500 M10.500 2.500h2.500v2.500 M13 7v2.500h-2.500 M5.500 9.500h-2.500v-2.500"/></svg>
<div class="t" style="left:1723.5px;top:1022.1px;font-size:12px;color:#484644;transform:scaleX(0.992);">Update available (click to download)</div>
<!-- p_taskbar -->
<div class="r" style="left:485px;top:1041px;width:47px;height:39px;background:rgba(255,255,255,0.45);"></div>
<div class="r" style="left:485px;top:1078px;width:47px;height:2px;background:#0ab4c0;"></div>
<div class="r" style="left:537.6px;top:1078px;width:40.1px;height:2px;background:#0ab4c0;"></div>
<div class="r" style="left:979px;top:1078px;width:40px;height:2px;background:#0ab4c0;"></div>
<div class="r" style="left:1419.6px;top:1078px;width:39.9px;height:2px;background:#0ab4c0;"></div>
<svg style="left:16px;top:1051.500px" width="17" height="17" viewBox="0 0 17 17" fill="#1a1a1a"><path d="M0 2.400l7-1v6.800h-7z M7.800 1.300l9.200-1.300v8.200h-9.200z M0 9h7v6.800l-7-1z M7.800 9h9.200v8l-9.200-1.300z"/></svg>
<div class="r" style="left:49px;top:1041.5px;width:286.7px;height:38.5px;background:#ffffff;"></div>
<svg style="left:59px;top:1051px" width="18" height="18" viewBox="0 0 18 18" fill="none" stroke="#1a1a1a" stroke-width="1.400"><circle cx="10.700" cy="6.800" r="5.300"/><path d="M7 10.700l-6 6"/></svg>
<div class="t" style="left:88.7px;top:1052.7px;font-size:15px;color:#3a3a3a;transform:scaleX(0.957);">Type here to search</div>
<svg style="left:258px;top:1041.500px" width="78" height="38.500" viewBox="0 0 78 38.500"><path d="M0 38.500c0-14 10-20 26-16l-2 16.500z" fill="#4db7d6"/><path d="M4 34c4-8 12-10 20-8l4 8-12 4.500z" fill="#7fd0e6"/><path d="M14 25l12-14 5-6 4 5 5-4 10 12 4 6h-34z" fill="#8d7b84"/><path d="M26 11l5-6 4 5-3 3-3-1z" fill="#efe9ea"/><path d="M35 10l5-4 6 7-5 1z" fill="#6c5a66"/><path d="M40 14h38v10h-44z" fill="#c4dff0"/><path d="M48 16c8-3 20-3 30 0v10h-30z" fill="#4aa3c9"/><path d="M18 38.500c2-10 14-14 26-12 10 2 24 0 34-4v16z" fill="#a7c957"/><path d="M60 38.500c4-6 10-9 18-10v10z" fill="#e8b54a"/><g fill="#2f7d3b"><path d="M43 36l4-9 4 9z M50 37l4-11 4 11z M60 35l3.500-9 3.500 9z M69 34l3-8 3 8z"/></g></svg>
<svg style="left:345.8px;top:1046px" width="28" height="28" viewBox="0 0 28 28"><g fill="none" stroke="#111" stroke-width="1.300"><path d="M6.500 6.300v2.200h10.500v-2.200 M6.500 20.900v-2.200h10.500v2.200"/><rect x="6.500" y="10.900" width="10.500" height="5.800"/><path d="M20.700 6.300v1.700 M20.700 14v6.900"/><rect x="19.300" y="9.600" width="2.800" height="2.900" fill="#111" stroke="none"/></g></svg>
<svg style="left:396.9px;top:1046px" width="28" height="28" viewBox="0 0 28 28"><rect x="2" y="2" width="24" height="24" fill="#000"/><path d="M9.500 6h3l3.500 10v-10h2.500v16h-3l-3.500-10v10h-2.500z" fill="#e50914"/></svg>
<svg style="left:445.5px;top:1046px" width="28" height="28" viewBox="0 0 28 28"><defs><linearGradient id="itg" x1="0" y1="0" x2="1" y2="1"><stop offset="0" stop-color="#f76ac0"/><stop offset="0.500" stop-color="#b46af0"/><stop offset="1" stop-color="#55b8f5"/></linearGradient><linearGradient id="itn" x1="0" y1="0" x2="0" y2="1"><stop offset="0" stop-color="#f0445f"/><stop offset="0.550" stop-color="#c660c0"/><stop offset="1" stop-color="#3a8af5"/></linearGradient></defs><circle cx="14" cy="13.800" r="10.300" fill="#f7f5f8" stroke="url(#itg)" stroke-width="1"/><path d="M12 8.800l6.500-1.500v9.200a2.200 1.900 0 1 1-1.400-1.900v-5l-3.700 .9v7.400a2.200 1.900 0 1 1-1.400-1.900z" fill="url(#itn)"/></svg>
<svg style="left:494.6px;top:1046px" width="28" height="28" viewBox="0 0 28 28"><circle cx="13" cy="12.500" r="11" fill="#fbbc04"/><path d="M13 12.500L3.500 7a11 11 0 0 1 19 0z" fill="#ea4335"/><path d="M13 12.500L3.500 7a11 11 0 0 0 8 16.400z" fill="#34a853"/><path d="M3.500 7a11 11 0 0 1 19 0h-9.500z" fill="#ea4335"/><circle cx="13" cy="12.500" r="5" fill="#fff"/><circle cx="13" cy="12.500" r="4" fill="#4285f4"/><circle cx="20.500" cy="20.500" r="6.500" fill="#14523c"/><text x="20.500" y="23.500" font-size="8" font-weight="bold" fill="#fff" text-anchor="middle" font-family="Liberation Sans, sans-serif">H</text></svg>
<svg style="left:542px;top:1046px" width="28" height="28" viewBox="0 0 28 28"><path d="M2 5h8l2 2.500h14v16h-24z" fill="#f5b82e"/><path d="M2 9.500h24v14h-24z" fill="#fcd45c"/><path d="M6 15h16v8.500h-16z" fill="#3b9be8"/><path d="M11 19h6v4.500h-6z" fill="#fcd45c"/></svg>
<svg style="left:593.3px;top:1046px" width="28" height="28" viewBox="0 0 28 28"><path d="M14 2c7 0 11 3 11 10s-4 10-11 10c-1 0-2 0-3-.3l-3.500 4v-5c-3.500-1.700-4.500-4.700-4.500-8.700 0-7 4-10 11-10z" fill="#7360f2"/><path d="M9.500 7.500c.8-.8 1.800-.3 2.200.7l.6 1.600c.2.600 0 1-.5 1.400-.5.500-.3 1 .3 2 .8 1.200 1.700 2 3 2.600.6.300 1 .2 1.400-.3.400-.5.900-.6 1.500-.3l1.500.9c.8.500.9 1.300.2 2-1 1.200-2.200 1.500-3.800.9-3.800-1.500-6.400-4.300-7.400-8-.3-1.400.1-2.600 1-3.500z" fill="#fff"/><path d="M14.500 6.500c3 .2 5 2.200 5.200 5.300 M15 8.700c1.700.2 2.700 1.200 2.800 2.900" fill="none" stroke="#fff" stroke-width="0.900"/></svg>
<svg style="left:641.4px;top:1046px" width="28" height="28" viewBox="0 0 28 28"><circle cx="14" cy="14" r="12.500" fill="#0b5cff"/><text x="14" y="16.300" font-size="6.500" font-weight="bold" fill="#fff" text-anchor="middle" font-family="Liberation Sans, sans-serif">zoom</text></svg>
<svg style="left:690.5px;top:1046px" width="28" height="28" viewBox="0 0 28 28"><defs><linearGradient id="msg" x1="0" y1="1" x2="1" y2="0"><stop offset="0" stop-color="#0a7cff"/><stop offset="0.500" stop-color="#a033ff"/><stop offset="1" stop-color="#ff5c87"/></linearGradient></defs><path d="M14 2c7 0 12 5 12 11.500s-5 11.500-12 11.500c-1.300 0-2.500-.2-3.600-.5l-3.900 2v-4c-2.800-2.100-4.500-5.300-4.500-9 0-6.500 5-11.500 12-11.500z" fill="url(#msg)"/><path d="M6.500 16.500l5-6 3.500 3 5-3-5 6-3.500-3z" fill="#fff"/></svg>
<svg style="left:740px;top:1046px" width="28" height="28" viewBox="0 0 28 28"><circle cx="14" cy="14" r="12.500" fill="#5865f2"/><path d="M8.500 9.500c1.500-.8 3-1.200 3.500-1.200l.5 1c1-.2 2-.2 3 0l.5-1c.5 0 2 .4 3.500 1.200 1.500 2.500 2.300 5.500 2 8.500-1.500 1.200-3 1.700-3.800 1.800l-.8-1.400c-1.800.7-3.600.7-5.800 0l-.8 1.400c-.8-.1-2.300-.6-3.800-1.800-.3-3 .5-6 2-8.500z" fill="#fff"/><ellipse cx="11.500" cy="14.500" rx="1.500" ry="1.800" fill="#5865f2"/><ellipse cx="16.500" cy="14.500" rx="1.500" ry="1.800" fill="#5865f2"/></svg>
<svg style="left:788.7px;top:1046px" width="28" height="28" viewBox="0 0 28 28"><rect x="2.500" y="3.500" width="23" height="21" fill="#fff" stroke="#111" stroke-width="1.500"/><path d="M14 24.500l11-20v20z" fill="#2a3be0"/><path d="M4 8h12 M4 11h10" stroke="#111" stroke-width="1.500"/><path d="M4 14h9" stroke="#e02a2a" stroke-width="2"/><g stroke="#fff" stroke-width="1"><path d="M14 10h12 M13 13h13 M12 16h14 M11 19h15 M10 22h16"/></g></svg>
<svg style="left:837.8px;top:1046px" width="28" height="28" viewBox="0 0 28 28"><rect x="2.500" y="3.500" width="23" height="21" fill="#fff" stroke="#111" stroke-width="1.500"/><path d="M14 24.500l11-20v20z" fill="#2a3be0"/><path d="M4 8h12 M4 11h10" stroke="#111" stroke-width="1.500"/><path d="M4 14h9" stroke="#e02a2a" stroke-width="2"/><g stroke="#fff" stroke-width="1"><path d="M14 10h12 M13 13h13 M12 16h14 M11 19h15 M10 22h16"/></g></svg>
<svg style="left:886.4px;top:1046px" width="28" height="28" viewBox="0 0 28 28"><rect x="2" y="3" width="24" height="22" fill="#f1f3f8" stroke="#c9cfdc" stroke-width="0.800"/><circle cx="13" cy="14" r="8" fill="none" stroke="#2a7fd0" stroke-width="3"/><path d="M6 14h14" stroke="#2a7fd0" stroke-width="2.500"/><path d="M8 22l14-9 2 2-12 8z" fill="#8d99ae"/></svg>
<svg style="left:934.5px;top:1046px" width="28" height="28" viewBox="0 0 28 28"><rect x="2" y="2" width="24" height="24" fill="#f4f6f8" stroke="#d5dbe2" stroke-width="0.800"/><g stroke="#4f7fa8" stroke-width="1.500" fill="none"><path d="M14 8v12 M8 14h12"/><path d="M14 3.500v3 M12.500 5h3 M14 21.500v3 M12.500 23h3 M4.500 14h3 M6 12.500v3 M20.500 14h3 M22 12.500v3 M7.500 7.500v3 M6 9h3 M20.500 7.500v3 M19 9h3 M7.500 17.500v3 M6 19h3 M20.500 17.500v3 M19 19h3" stroke-width="1"/></g></svg>
<svg style="left:985px;top:1046px" width="28" height="28" viewBox="0 0 28 28"><rect x="15" y="2" width="8" height="24" rx="1.500" fill="#e6a11c"/><rect x="9.500" y="8" width="8" height="18" rx="1.500" fill="#f2c12e"/><rect x="4" y="14" width="8" height="12" rx="1.500" fill="#f8dc5e"/></svg>
<svg style="left:1033.3px;top:1046px" width="28" height="28" viewBox="0 0 28 28"><path d="M12 7a6 6 0 0 1 11-1 4.500 4.500 0 0 1 1 9h-11z" fill="#5ec1f0"/><ellipse cx="9.500" cy="11" rx="6.500" ry="2.500" fill="#2e8ae0"/><path d="M3 11v11c0 1.500 3 2.500 6.500 2.500s6.500-1 6.500-2.500v-11c0 1.500-3 2.500-6.500 2.500s-6.500-1-6.500-2.500z" fill="#1e6fc8"/><path d="M4 19l2.500-2 1.500 3 2-5 1.500 3h3" stroke="#fff" stroke-width="1" fill="none"/><circle cx="20" cy="21" r="4" fill="none" stroke="#3aa0e8" stroke-width="2.500" stroke-dasharray="2.200 1"/></svg>
<svg style="left:1082.2px;top:1046px" width="28" height="28" viewBox="0 0 28 28"><rect x="2" y="2" width="24" height="24" rx="3" fill="#25557a" stroke="#16344b"/><path d="M5 8c4-2 8 0 10 4 2 3 5 5 7 9-3-2-5-2-7-1 0-3-2-6-5-8-2-1-4-2-5-4z" fill="none" stroke="#fff" stroke-width="1.200"/><path d="M17 6l5 4-2 0 2 3" stroke="#fff" stroke-width="1" fill="none"/></svg>
<svg style="left:1131.6px;top:1046px" width="28" height="28" viewBox="0 0 28 28"><path d="M8 3c-4 1-5 5-4 10 1 4 2 7 4 8 1 .5 2-1 2-2l1 5c.5 2 4 2 5 0l1-6c3 1 6-1 7-5 1-5-1-9-5-10-2-.5-4 0-5 1-2-1.500-4-1.500-6-1z" fill="#336791" stroke="#1d3f5c" stroke-width="0.800"/><path d="M12 5c-2 3-2 8 0 12 M17 6c1 3 1 7-1 10" stroke="#fff" stroke-width="0.900" fill="none"/><circle cx="10" cy="9" r="0.800" fill="#fff"/><circle cx="18" cy="9" r="0.800" fill="#fff"/></svg>
<svg style="left:1180.5px;top:1046px" width="28" height="28" viewBox="0 0 28 28"><path d="M20 2l6 3v18l-6 3-13-11-4 3-2-1.500v-5l2-1.500 4 3z" fill="#2489ca"/><path d="M20 8.500l-7.500 5.500 7.500 5.500z" fill="#e6e2da"/><path d="M20 2l6 3v18l-6 3z" fill="#1070b3"/></svg>
<svg style="left:1229.4px;top:1046px" width="28" height="28" viewBox="0 0 28 28"><path d="M3 7v-4h4 M21 3h4v4 M25 21v4h-4 M7 25h-4v-4" fill="none" stroke="#3aa655" stroke-width="1.500"/><path d="M6 7v9c0 1.300 2.500 2.300 5 2.300s5-1 5-2.300v-9" fill="#f3c13a" stroke="#d9a520" stroke-width="0.600"/><ellipse cx="11" cy="7" rx="5" ry="2" fill="#f8dc7a" stroke="#d9a520" stroke-width="0.600"/><path d="M11 24l11-11 M12 13l10 11" stroke="#e8762c" stroke-width="2"/><path d="M21 11.500l2.500 2.500" stroke="#e8762c" stroke-width="3.500"/></svg>
<svg style="left:1278.3px;top:1046px" width="28" height="28" viewBox="0 0 28 28"><circle cx="14" cy="14" r="10" fill="none" stroke="#3aa83a" stroke-width="3.600"/><circle cx="14" cy="14" r="12.200" fill="none" stroke="#3aa83a" stroke-width="1.200" stroke-dasharray="1.500 1.500"/></svg>
<svg style="left:1328.2px;top:1046px" width="28" height="28" viewBox="0 0 28 28"><g fill="none" stroke="#111" stroke-width="1.600"><path d="M4 9h17 M16 4.500l5 4.500-5 4.500"/><path d="M24 19h-17 M12 14.500l-5 4.500 5 4.500"/><path d="M4.500 4v10 M23.500 14v10" stroke-width="1.800"/></g></svg>
<svg style="left:1377px;top:1046px" width="28" height="28" viewBox="0 0 28 28"><ellipse cx="12" cy="10.500" rx="10" ry="6.500" fill="#fff" stroke="#e03a3a" stroke-width="1.600" transform="rotate(-15 12 10.500)"/><path d="M11 8l9 13 M17 7l-7 14" stroke="#9a9a9a" stroke-width="1.500"/><circle cx="21" cy="23" r="2.600" fill="none" stroke="#2a7fd0" stroke-width="1.600"/><circle cx="9" cy="23" r="2.600" fill="none" stroke="#2a7fd0" stroke-width="1.600"/></svg>
<svg style="left:1426px;top:1046px" width="28" height="28" viewBox="0 0 28 28"><rect x="3.500" y="3.500" width="21" height="21" rx="3.500" fill="#b30b00"/><path d="M7 20c2-1 4-4 6-8 1-2.500 1-5 0-5s-1 3 1 6 5 5 7 5 1.500-1.500-1-1.500c-4 0-9 1.500-13 3.500z" fill="none" stroke="#fff" stroke-width="1.400"/></svg>
<svg style="left:1565.8px;top:1046px" width="28" height="28" viewBox="0 0 28 28"><defs><linearGradient id="sun" x1="0" y1="0" x2="0" y2="1"><stop offset="0" stop-color="#fbbf24"/><stop offset="1" stop-color="#ea580c"/></linearGradient></defs><circle cx="12.500" cy="12.500" r="10" fill="url(#sun)"/><path d="M5 8.500h9 M1 13h16 M1 17h20" stroke="#f3e3b0" stroke-width="1.500"/><circle cx="18.500" cy="7.800" r="5.800" fill="#d92c2c"/><text x="18.500" y="10.700" font-size="8" fill="#fff" text-anchor="middle" font-family="Liberation Sans, sans-serif">1</text></svg>
<div class="t" style="left:1598.7px;top:1054.1px;font-size:14px;color:#1a1a1a;transform:scaleX(0.895);">30°C</div>
<svg style="left:1640px;top:1041px" width="276" height="39" viewBox="1640 1041 276 39" fill="none" stroke="#1a1a1a" stroke-width="1.200"><path d="M1653 1064l5.500-5.500 5.500 5.500" stroke-width="1.400"/><rect x="1678.500" y="1056.500" width="8" height="8" rx="1.500"/><path d="M1686.500 1059.500l3-1.500v5l-3-1.500"/><path d="M1679 1054c2-1.500 5-1.500 7 0 M1679 1067c2 1.500 5 1.500 7 0" stroke-width="0.900"/><path d="M1700 1066c-3 0-4-4-1-5 0-3 4-5 6.500-2.500 3-1 5 1.500 4.500 3.500 3 .5 2.500 4-0.500 4z" fill="#7a7a7a" stroke="#3a3a3a"/><rect x="1726.500" y="1055.500" width="12" height="8"/><path d="M1729 1067h7 M1732.500 1063.500v3.500"/><rect x="1724" y="1053" width="5" height="6" fill="#efe3dc"/><path d="M1725 1055h3"/><path d="M1748.500 1058.500h2.500l4-3.500v11l-4-3.500h-2.500z"/><path d="M1757.500 1057.500c1.500 1.500 1.500 4.500 0 6 M1760 1055.500c2.500 2.500 2.500 7.500 0 10" stroke-width="1"/><path d="M1762.500 1054c3 3.500 3 9.500 0 13" stroke="#8a8a8a" stroke-width="1"/><path d="M1880 1053h14.500v11.500h-4l-3.300 3-3.300-3h-3.900z" stroke-width="1.300"/></svg>
<div class="t" style="left:1773.4px;top:1054.9px;font-size:12.5px;color:#1a1a1a;transform:scaleX(0.827);">ENG</div>
<div class="t" style="left:1814.3px;top:1045.0px;font-size:12.5px;color:#1a1a1a;transform:scaleX(0.889);">5:54 PM</div>
<div class="t" style="left:1806.8px;top:1062.4px;font-size:12.5px;color:#1a1a1a;transform:scaleX(0.923);">11/28/2023</div>
</body></html>
